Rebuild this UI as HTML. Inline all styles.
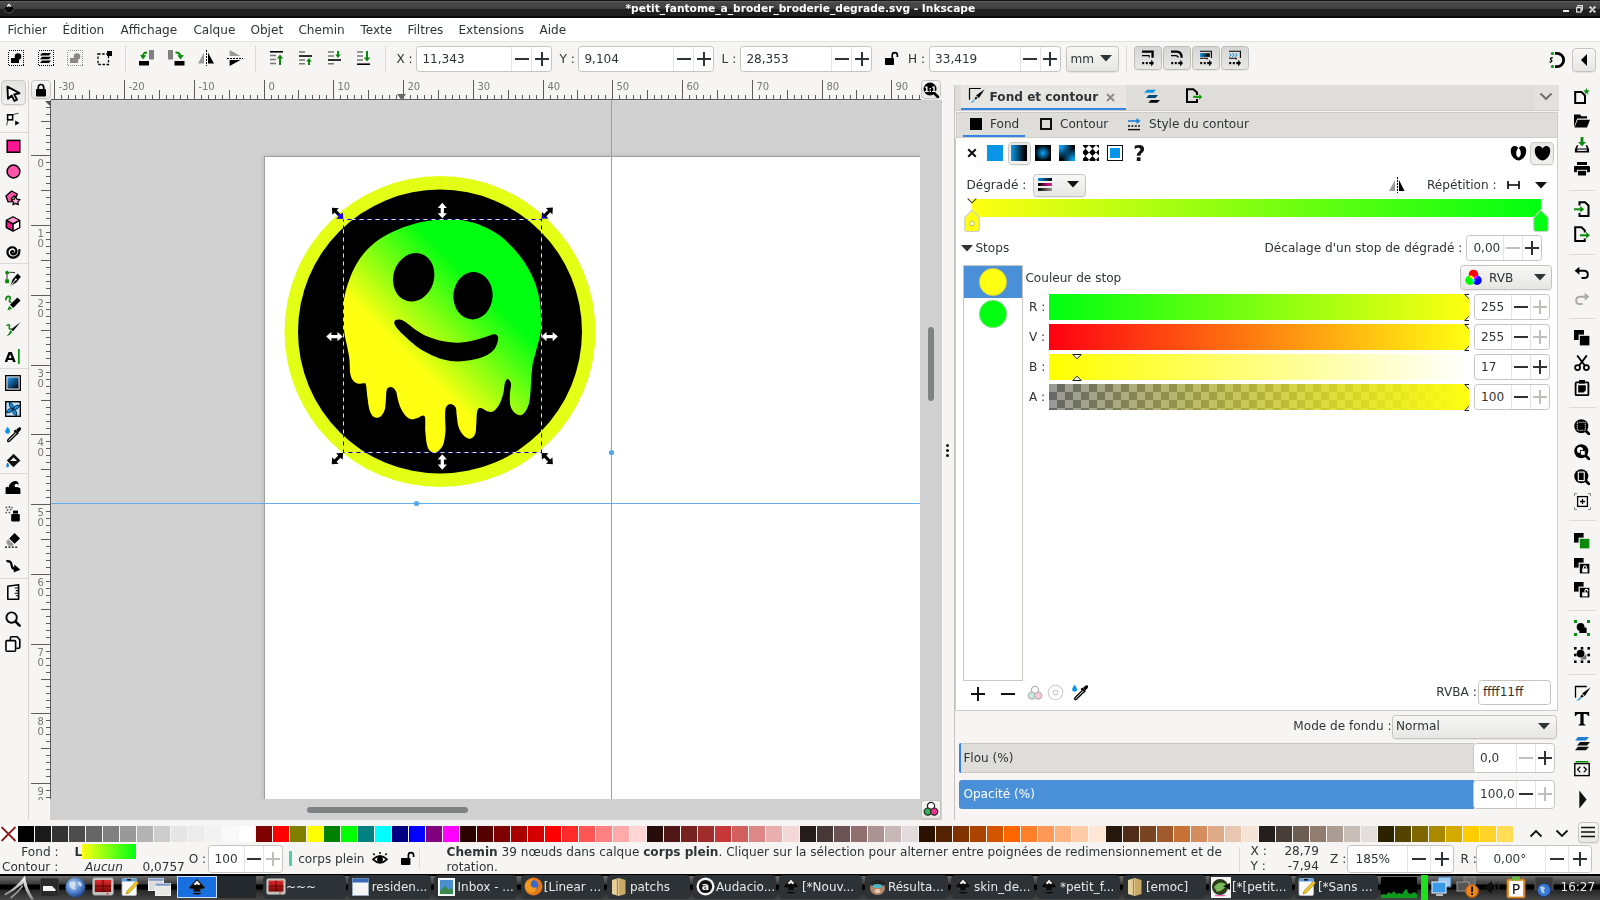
<!DOCTYPE html>
<html lang="fr"><head><meta charset="utf-8"><title>Inkscape</title>
<style>
html,body{margin:0;padding:0}
body{width:1600px;height:900px;position:relative;overflow:hidden;background:#f6f5f4;font-family:"DejaVu Sans","Liberation Sans",sans-serif;font-size:12px;color:#2e3436}
.t{position:absolute;white-space:nowrap;line-height:1}
.r{position:absolute;box-sizing:border-box;display:block}
.box{position:absolute;box-sizing:border-box;background:#fff;border:1px solid #c6c4c0;border-radius:3.5px}
.btn{position:absolute;box-sizing:border-box;border:1px solid #c6c4c0;border-radius:3.5px;background:linear-gradient(#f7f7f6,#e6e6e3);box-shadow:0 1px 0 rgba(0,0,0,.06)}
.btn.on{background:#d6d1cd;border-color:#b6b0aa}
</style></head><body>
<div class="r" style="left:0px;top:0px;width:1600px;height:18px;background:linear-gradient(#111 0,#111 1px,#5c5c5c 1px,#5c5c5c 2px,#4b4b4b 2px,#3d3d3d 9px,#212121 9px,#1f1f1f 16px,#0c0c0c 16px);"></div>
<div class="t" style="left:625.5px;top:4px;font-size:10.67px;color:#fff;font-weight:bold;">*petit_fantome_a_broder_broderie_degrade.svg - Inkscape</div>
<svg class="r" style="left:3px;top:2px;" width="12" height="13" viewBox="0 0 12 13"><path d="M6 0.5 L11.5 6.5 Q9 8 10 9.5 Q6 12.5 2 9.5 Q3 8 0.5 6.5 Z" fill="#0a0a0a" stroke="#777" stroke-width=".6"/><path d="M6 1.2 L8.6 4.2 L7.2 5 L6 4.2 L4.8 5 L3.4 4.2Z" fill="#e8e8e8"/></svg>
<div class="r" style="left:1563px;top:10px;width:6px;height:2px;background:#eee;"></div>
<svg class="r" style="left:1576px;top:5px;" width="7" height="8" viewBox="0 0 7 8"><rect x="2" y=".7" width="4.3" height="4.3" fill="none" stroke="#eee" stroke-width="1.2"/><rect x=".7" y="2.7" width="4.3" height="4.3" fill="#111" stroke="#eee" stroke-width="1.2"/></svg>
<svg class="r" style="left:1589px;top:6px;" width="7" height="7" viewBox="0 0 7 7"><path d="M.7 .7 L6.3 6.3 M6.3 .7 L.7 6.3" stroke="#eee" stroke-width="1.8"/><rect x="2" y="2" width="3" height="3" fill="#bbb"/></svg>
<div class="r" style="left:0px;top:18px;width:1600px;height:23px;background:#fff;"></div>
<div class="r" style="left:0px;top:41px;width:1600px;height:1px;background:#e4e2e0;"></div>
<div class="t" style="left:7.4px;top:24px;font-size:12.1px;">Fichier</div>
<div class="t" style="left:62.4px;top:24px;font-size:12.1px;">Édition</div>
<div class="t" style="left:120.4px;top:24px;font-size:12.1px;">Affichage</div>
<div class="t" style="left:193.4px;top:24px;font-size:12.1px;">Calque</div>
<div class="t" style="left:250.4px;top:24px;font-size:12.1px;">Objet</div>
<div class="t" style="left:298.4px;top:24px;font-size:12.1px;">Chemin</div>
<div class="t" style="left:360.4px;top:24px;font-size:12.1px;">Texte</div>
<div class="t" style="left:407.4px;top:24px;font-size:12.1px;">Filtres</div>
<div class="t" style="left:458.4px;top:24px;font-size:12.1px;">Extensions</div>
<div class="t" style="left:539.4px;top:24px;font-size:12.1px;">Aide</div>
<svg class="r" style="left:8px;top:50px;" width="16" height="16" viewBox="0 0 16 16"><rect x=".5" y=".5" width="15" height="15" stroke="#000" stroke-width="1" stroke-dasharray="1 1" fill="none" shape-rendering="crispEdges"/><rect x="3" y="8" width="8" height="5" fill="#000"/><circle cx="10" cy="6.5" r="3.3" fill="#000"/></svg>
<svg class="r" style="left:38px;top:50px;" width="16" height="16" viewBox="0 0 16 16"><rect x=".5" y=".5" width="15" height="15" stroke="#000" stroke-width="1" stroke-dasharray="1 1" fill="none" shape-rendering="crispEdges"/><path d="M4 3h9l-2 2.6H2zM4 6.7h9l-2 2.6H2zM4 10.4h9l-2 2.6H2z" fill="#000"/></svg>
<svg class="r" style="left:67px;top:50px;" width="16" height="16" viewBox="0 0 16 16"><rect x=".5" y=".5" width="15" height="15" stroke="#8a8a8a" stroke-width="1" stroke-dasharray="1 1" fill="none" shape-rendering="crispEdges"/><rect x="3" y="8" width="8" height="5" fill="#8a8a8a"/><circle cx="10" cy="6.5" r="3.3" fill="#8a8a8a"/></svg>
<svg class="r" style="left:97px;top:50px;" width="16" height="16" viewBox="0 0 16 16"><rect x="1" y="4" width="10.5" height="10.5" stroke="#000" stroke-width="1.3" stroke-dasharray="2.5 1.6" fill="none"/><rect x="10" y="1" width="5" height="5" fill="#000"/></svg>
<div class="r" style="left:125px;top:46px;width:1px;height:26px;background:#dcd9d6;"></div>
<svg class="r" style="left:139px;top:49px;" width="17" height="17" viewBox="0 0 17 17"><rect x="10" y="1" width="5" height="9.5" fill="#808080"/><rect x="0" y="12" width="10" height="4.5" fill="#000"/><path d="M8 3.5 Q3.5 3.5 4 8" stroke="#0a8a0a" stroke-width="1.8" fill="none"/><path d="M1 6 L4 10.5 L7.3 6.3 Z" fill="#0a8a0a"/></svg>
<svg class="r" style="left:168px;top:49px;" width="17" height="17" viewBox="0 0 17 17"><rect x="0" y="1" width="5" height="9.5" fill="#808080"/><rect x="6.5" y="12" width="10" height="4.5" fill="#000"/><path d="M7.5 3.5 Q12.5 3.5 12.5 8" stroke="#0a8a0a" stroke-width="1.8" fill="none"/><path d="M9.3 6.3 L12.6 10.5 L15.8 6 Z" fill="#0a8a0a"/></svg>
<svg class="r" style="left:198px;top:50px;" width="16" height="16" viewBox="0 0 16 16"><path d="M6 2.6V13.5H0Z" fill="#9a9a9a"/><path d="M10 2.6V13.5H16Z" fill="#000"/><path d="M8 0V16" stroke="#000" stroke-width="1" stroke-dasharray="2 1" shape-rendering="crispEdges"/></svg>
<svg class="r" style="left:227px;top:50px;" width="16" height="16" viewBox="0 0 16 16"><path d="M2.6 6H13.5L2.6 0Z" fill="#9a9a9a"/><path d="M2.6 10H13.5L2.6 16Z" fill="#000"/><path d="M0 8H16" stroke="#000" stroke-width="1" stroke-dasharray="2 1" shape-rendering="crispEdges"/></svg>
<div class="r" style="left:255px;top:46px;width:1px;height:26px;background:#dcd9d6;"></div>
<svg class="r" style="left:270px;top:50px;" width="14" height="16" viewBox="0 0 14 16"><rect x="0" y="1" width="13" height="1.6" fill="#000"/><path d="M0 5.5h6M0 9.5h6M0 13.5h6" stroke="#777" stroke-width="1.4"/><path d="M10 15V7" stroke="#0a8a0a" stroke-width="2"/><path d="M6.8 8.5L10 4.5L13.2 8.5Z" fill="#0a8a0a"/></svg>
<svg class="r" style="left:299px;top:50px;" width="14" height="16" viewBox="0 0 14 16"><path d="M0 2h6M0 10h6M0 13.8h6" stroke="#777" stroke-width="1.4"/><rect x="0" y="5.2" width="13" height="1.6" fill="#000"/><path d="M10 15V10.5" stroke="#0a8a0a" stroke-width="2"/><path d="M7.2 11.5L10 8L12.8 11.5Z" fill="#0a8a0a"/></svg>
<svg class="r" style="left:328px;top:50px;" width="14" height="16" viewBox="0 0 14 16"><path d="M0 2h6M0 6h6M0 13.8h6" stroke="#777" stroke-width="1.4"/><rect x="0" y="9.2" width="13" height="1.6" fill="#000"/><path d="M10 1V5" stroke="#0a8a0a" stroke-width="2"/><path d="M7.2 4.5L10 8L12.8 4.5Z" fill="#0a8a0a"/></svg>
<svg class="r" style="left:357px;top:50px;" width="14" height="16" viewBox="0 0 14 16"><path d="M0 2h6M0 6h6M0 10h6" stroke="#777" stroke-width="1.4"/><rect x="0" y="13.4" width="13" height="1.6" fill="#000"/><path d="M10 1V8" stroke="#0a8a0a" stroke-width="2"/><path d="M6.8 7.5L10 11.5L13.2 7.5Z" fill="#0a8a0a"/></svg>
<div class="r" style="left:385px;top:46px;width:1px;height:26px;background:#dcd9d6;"></div>
<div class="t" style="left:396.4px;top:53px;font-size:12.1px;">X :</div>
<div class="box" style="left:416px;top:46px;width:136px;height:26px"></div>
<div class="r" style="left:511px;top:47px;width:1px;height:24px;background:#e6e3e0;"></div>
<div class="r" style="left:531px;top:47px;width:1px;height:24px;background:#e6e3e0;"></div>
<div class="t" style="left:422.4px;top:53px;font-size:12.1px;">11,343</div>
<div class="r" style="left:514.5px;top:58.0px;width:14px;height:2px;background:#2e3436;"></div>
<div class="r" style="left:534.5px;top:58.0px;width:14px;height:2px;background:#2e3436;"></div>
<div class="r" style="left:540.5px;top:52.0px;width:2px;height:14px;background:#2e3436;"></div>
<div class="t" style="left:559.6px;top:53px;font-size:12.1px;">Y :</div>
<div class="box" style="left:578px;top:46px;width:136px;height:26px"></div>
<div class="r" style="left:673px;top:47px;width:1px;height:24px;background:#e6e3e0;"></div>
<div class="r" style="left:693px;top:47px;width:1px;height:24px;background:#e6e3e0;"></div>
<div class="t" style="left:584.4px;top:53px;font-size:12.1px;">9,104</div>
<div class="r" style="left:676.5px;top:58.0px;width:14px;height:2px;background:#2e3436;"></div>
<div class="r" style="left:696.5px;top:58.0px;width:14px;height:2px;background:#2e3436;"></div>
<div class="r" style="left:702.5px;top:52.0px;width:2px;height:14px;background:#2e3436;"></div>
<div class="t" style="left:721.6px;top:53px;font-size:12.1px;">L :</div>
<div class="box" style="left:739.5px;top:46px;width:132.5px;height:26px"></div>
<div class="r" style="left:831.0px;top:47px;width:1px;height:24px;background:#e6e3e0;"></div>
<div class="r" style="left:851.0px;top:47px;width:1px;height:24px;background:#e6e3e0;"></div>
<div class="t" style="left:746.4px;top:53px;font-size:12.1px;">28,353</div>
<div class="r" style="left:834.5px;top:58.0px;width:14px;height:2px;background:#2e3436;"></div>
<div class="r" style="left:854.5px;top:58.0px;width:14px;height:2px;background:#2e3436;"></div>
<div class="r" style="left:860.5px;top:52.0px;width:2px;height:14px;background:#2e3436;"></div>
<svg class="r" style="left:884px;top:51px;" width="15" height="15" viewBox="0 0 15 15"><rect x="1" y="7" width="9" height="7" rx=".8" fill="#000"/><path d="M8.2 7.5V4.3a2.6 2.6 0 0 1 5.2 0V6" stroke="#000" stroke-width="1.7" fill="none"/></svg>
<div class="t" style="left:908px;top:53px;font-size:12.1px;">H :</div>
<div class="box" style="left:928.5px;top:46px;width:132px;height:26px"></div>
<div class="r" style="left:1019.5px;top:47px;width:1px;height:24px;background:#e6e3e0;"></div>
<div class="r" style="left:1039.5px;top:47px;width:1px;height:24px;background:#e6e3e0;"></div>
<div class="t" style="left:935px;top:53px;font-size:12.1px;">33,419</div>
<div class="r" style="left:1023.0px;top:58.0px;width:14px;height:2px;background:#2e3436;"></div>
<div class="r" style="left:1043.0px;top:58.0px;width:14px;height:2px;background:#2e3436;"></div>
<div class="r" style="left:1049.0px;top:52.0px;width:2px;height:14px;background:#2e3436;"></div>
<div class="btn" style="left:1065.5px;top:46px;width:53px;height:26px"></div>
<div class="t" style="left:1070.5px;top:53px;font-size:12.1px;">mm</div>
<svg class="r" style="left:1100px;top:55px;" width="12" height="7" viewBox="0 0 12 7"><path d="M0 0H12L6 6.5Z" fill="#2e3436"/></svg>
<div class="r" style="left:1126px;top:46px;width:1px;height:26px;background:#dcd9d6;"></div>
<div class="btn" style="left:1134px;top:46px;width:28px;height:24px;background:linear-gradient(#d6d6d4,#e8e8e6);border-color:#bfbdb7;border-radius:3.5px"></div>
<div class="btn" style="left:1163px;top:46px;width:28px;height:24px;background:linear-gradient(#d6d6d4,#e8e8e6);border-color:#bfbdb7;border-radius:3.5px"></div>
<div class="btn" style="left:1192px;top:46px;width:28px;height:24px;background:linear-gradient(#d6d6d4,#e8e8e6);border-color:#bfbdb7;border-radius:3.5px"></div>
<div class="btn" style="left:1221px;top:46px;width:28px;height:24px;background:linear-gradient(#d6d6d4,#e8e8e6);border-color:#bfbdb7;border-radius:3.5px"></div>
<svg class="r" style="left:1140px;top:50px;" width="17" height="17" viewBox="0 0 17 17"><path d="M2 1.7H12.6V7.8" stroke="#000" stroke-width="2.3" fill="none"/><path d="M2 5.6H9.2V7.6" stroke="#000" stroke-width="1.1" fill="none"/><rect x="2.2" y="12" width="2" height="2.2" fill="#000"/><rect x="5.8" y="12" width="2" height="2.2" fill="#000"/><rect x="9.2" y="12" width="2.6" height="2.2" fill="#000"/><path d="M11.2 9.8L14 13.1L11.2 16.4Z" fill="#000"/></svg>
<svg class="r" style="left:1169px;top:50px;" width="17" height="17" viewBox="0 0 17 17"><path d="M2 1.7H7.6Q12.6 1.7 12.6 7.8" stroke="#000" stroke-width="2.3" fill="none"/><path d="M2 5.6H6.6Q9.2 5.6 9.2 7.8" stroke="#000" stroke-width="1.1" fill="none"/><rect x="2.2" y="12" width="2" height="2.2" fill="#000"/><rect x="5.8" y="12" width="2" height="2.2" fill="#000"/><rect x="9.2" y="12" width="2.6" height="2.2" fill="#000"/><path d="M11.2 9.8L14 13.1L11.2 16.4Z" fill="#000"/></svg>
<svg class="r" style="left:1198px;top:50px;" width="17" height="17" viewBox="0 0 17 17"><defs><linearGradient id="tg1" x1="0" x2="1"><stop offset="0" stop-color="#0a96e8"/><stop offset=".85" stop-color="#000"/></linearGradient></defs><path d="M2 1.2H13.4V8" stroke="#000" stroke-width="1.1" fill="none"/><rect x="2" y="3.2" width="9.8" height="3.7" fill="url(#tg1)"/><path d="M2 8.2H9.2V9.6" stroke="#000" stroke-width="1.1" fill="none"/><rect x="2.2" y="12" width="2" height="2.2" fill="#000"/><rect x="5.8" y="12" width="2" height="2.2" fill="#000"/><rect x="9.2" y="12" width="2.6" height="2.2" fill="#000"/><path d="M11.2 9.8L14 13.1L11.2 16.4Z" fill="#000"/></svg>
<svg class="r" style="left:1227px;top:50px;" width="17" height="17" viewBox="0 0 17 17"><path d="M2 1.2H13.4V8" stroke="#000" stroke-width="1.1" fill="none"/><path d="M2.2 3.4L4.2 5.1L2.2 6.8M5.2 3.4L7.2 5.1L5.2 6.8M8.2 3.4L10.2 5.1L8.2 6.8" stroke="#0a96e8" stroke-width="1" fill="none"/><path d="M2 8.2H9.2V9.6" stroke="#000" stroke-width="1.1" fill="none"/><rect x="2.2" y="12" width="2" height="2.2" fill="#000"/><rect x="5.8" y="12" width="2" height="2.2" fill="#000"/><rect x="9.2" y="12" width="2.6" height="2.2" fill="#000"/><path d="M11.2 9.8L14 13.1L11.2 16.4Z" fill="#000"/></svg>
<svg class="r" style="left:1547px;top:50px;" width="20" height="20" viewBox="0 0 20 20"><path d="M8 3.3H10A6.65 6.65 0 0 1 10 16.6H8" stroke="#000" stroke-width="2.8" fill="none"/><circle cx="5.4" cy="3.5" r="1.6" fill="#0a960a"/><circle cx="5.4" cy="16.5" r="1.6" fill="#0a960a"/><path d="M5.8 7.6Q2.6 8 3.8 9.6Q6.4 10.8 2.6 12.4" stroke="#000" stroke-width="1.3" fill="none"/></svg>
<div class="btn" style="left:1572.4px;top:48.2px;width:23.4px;height:23.6px;border-radius:4px"></div>
<svg class="r" style="left:1580px;top:54px;" width="8" height="12" viewBox="0 0 8 12"><path d="M7 0V12L1 6Z" fill="#000"/></svg>
<div class="r" style="left:28px;top:80px;width:1px;height:740px;background:#d8d5d2;"></div>
<div class="r" style="left:920px;top:100px;width:22px;height:720px;background:#cfd0cf;"></div>
<div class="r" style="left:50px;top:799px;width:892px;height:21px;background:#cfd0cf;"></div>
<div class="r" style="left:51px;top:100px;width:869px;height:699px;background:#d1d1d1;overflow:hidden"><div class="r" style="left:213px;top:56px;width:700px;height:700px;background:#fff;border-left:1px solid #9f9f9f;border-top:1px solid #9f9f9f;box-shadow:0 0 5px rgba(0,0,0,.14)"></div></div>
<div class="r" style="left:611px;top:100px;width:1px;height:699px;background:#60aeec;"></div>
<div class="r" style="left:51px;top:503px;width:869px;height:1px;background:#60aeec;"></div>
<svg class="r" style="left:413px;top:500px;" width="7" height="7" viewBox="0 0 7 7"><circle cx="3.5" cy="3.5" r="2.6" fill="#52a8ea"/></svg>
<svg class="r" style="left:608px;top:449px;" width="7" height="7" viewBox="0 0 7 7"><circle cx="3.5" cy="3.5" r="2.6" fill="#52a8ea"/></svg>
<div class="r" style="left:928px;top:327px;width:6px;height:74px;background:#7e8283;border-radius:3px"></div>
<div class="r" style="left:307px;top:807px;width:161px;height:6px;background:#7e8283;border-radius:3px"></div>
<svg class="r" style="left:0px;top:80px;" width="942" height="20" viewBox="0 0 942 20"><rect x="31" y="0" width="911" height="20" fill="#f6f5f4"/><path d="M54.5 0V19M61.5 14.5V19M68.5 14.5V19M75.5 14.5V19M82.5 14.5V19M89.5 9.5V19M96.5 14.5V19M103.5 14.5V19M110.5 14.5V19M117.5 14.5V19M124.5 0V19M131.5 14.5V19M138.5 14.5V19M145.5 14.5V19M152.5 14.5V19M159.5 9.5V19M166.5 14.5V19M173.5 14.5V19M180.5 14.5V19M187.5 14.5V19M194.5 0V19M201.5 14.5V19M208.5 14.5V19M215.5 14.5V19M222.5 14.5V19M229.5 9.5V19M236.5 14.5V19M243.5 14.5V19M250.5 14.5V19M257.5 14.5V19M264.5 0V19M271.5 14.5V19M278.5 14.5V19M285.5 14.5V19M292.5 14.5V19M298.5 9.5V19M305.5 14.5V19M312.5 14.5V19M319.5 14.5V19M326.5 14.5V19M333.5 0V19M340.5 14.5V19M347.5 14.5V19M354.5 14.5V19M361.5 14.5V19M368.5 9.5V19M375.5 14.5V19M382.5 14.5V19M389.5 14.5V19M396.5 14.5V19M403.5 0V19M410.5 14.5V19M417.5 14.5V19M424.5 14.5V19M431.5 14.5V19M438.5 9.5V19M445.5 14.5V19M452.5 14.5V19M459.5 14.5V19M466.5 14.5V19M473.5 0V19M480.5 14.5V19M487.5 14.5V19M494.5 14.5V19M501.5 14.5V19M508.5 9.5V19M515.5 14.5V19M522.5 14.5V19M529.5 14.5V19M536.5 14.5V19M543.5 0V19M550.5 14.5V19M557.5 14.5V19M564.5 14.5V19M571.5 14.5V19M577.5 9.5V19M584.5 14.5V19M591.5 14.5V19M598.5 14.5V19M605.5 14.5V19M612.5 0V19M619.5 14.5V19M626.5 14.5V19M633.5 14.5V19M640.5 14.5V19M647.5 9.5V19M654.5 14.5V19M661.5 14.5V19M668.5 14.5V19M675.5 14.5V19M682.5 0V19M689.5 14.5V19M696.5 14.5V19M703.5 14.5V19M710.5 14.5V19M717.5 9.5V19M724.5 14.5V19M731.5 14.5V19M738.5 14.5V19M745.5 14.5V19M752.5 0V19M759.5 14.5V19M766.5 14.5V19M773.5 14.5V19M780.5 14.5V19M787.5 9.5V19M794.5 14.5V19M801.5 14.5V19M808.5 14.5V19M815.5 14.5V19M822.5 0V19M829.5 14.5V19M836.5 14.5V19M843.5 14.5V19M850.5 14.5V19M856.5 9.5V19M863.5 14.5V19M870.5 14.5V19M877.5 14.5V19M884.5 14.5V19M891.5 0V19M898.5 14.5V19M905.5 14.5V19M912.5 14.5V19M919.5 14.5V19" stroke="#5c5c5c" stroke-width="1" fill="none" shape-rendering="crispEdges"/><rect x="51" y="19" width="870" height="1" fill="#5c5c5c"/></svg>
<div class="t" style="left:58.4px;top:82px;font-size:10px;color:#777;">-30</div>
<div class="t" style="left:128.4px;top:82px;font-size:10px;color:#777;">-20</div>
<div class="t" style="left:198.4px;top:82px;font-size:10px;color:#777;">-10</div>
<div class="t" style="left:268.4px;top:82px;font-size:10px;color:#777;">0</div>
<div class="t" style="left:337.4px;top:82px;font-size:10px;color:#777;">10</div>
<div class="t" style="left:407.4px;top:82px;font-size:10px;color:#777;">20</div>
<div class="t" style="left:477.4px;top:82px;font-size:10px;color:#777;">30</div>
<div class="t" style="left:547.4px;top:82px;font-size:10px;color:#777;">40</div>
<div class="t" style="left:616.4px;top:82px;font-size:10px;color:#777;">50</div>
<div class="t" style="left:686.4px;top:82px;font-size:10px;color:#777;">60</div>
<div class="t" style="left:756.4px;top:82px;font-size:10px;color:#777;">70</div>
<div class="t" style="left:826.4px;top:82px;font-size:10px;color:#777;">80</div>
<div class="t" style="left:895.4px;top:82px;font-size:10px;color:#777;">90</div>
<svg class="r" style="left:397px;top:94px;" width="9" height="6" viewBox="0 0 9 6"><path d="M0 0H9L4.5 6Z" fill="#666"/></svg>
<svg class="r" style="left:31px;top:100px;" width="20" height="699" viewBox="0 0 20 699"><path d="M14.5 7.5H19M14.5 14.5H19M9.5 21.5H19M14.5 28.5H19M14.5 35.5H19M14.5 42.5H19M14.5 49.5H19M0 55.5H19M14.5 62.5H19M14.5 69.5H19M14.5 76.5H19M14.5 83.5H19M9.5 90.5H19M14.5 97.5H19M14.5 104.5H19M14.5 111.5H19M14.5 118.5H19M0 125.5H19M14.5 132.5H19M14.5 139.5H19M14.5 146.5H19M14.5 153.5H19M9.5 160.5H19M14.5 167.5H19M14.5 174.5H19M14.5 181.5H19M14.5 188.5H19M0 195.5H19M14.5 202.5H19M14.5 209.5H19M14.5 216.5H19M14.5 223.5H19M9.5 230.5H19M14.5 237.5H19M14.5 244.5H19M14.5 251.5H19M14.5 258.5H19M0 265.5H19M14.5 272.5H19M14.5 279.5H19M14.5 286.5H19M14.5 293.5H19M9.5 300.5H19M14.5 307.5H19M14.5 314.5H19M14.5 321.5H19M14.5 328.5H19M0 334.5H19M14.5 341.5H19M14.5 348.5H19M14.5 355.5H19M14.5 362.5H19M9.5 369.5H19M14.5 376.5H19M14.5 383.5H19M14.5 390.5H19M14.5 397.5H19M0 404.5H19M14.5 411.5H19M14.5 418.5H19M14.5 425.5H19M14.5 432.5H19M9.5 439.5H19M14.5 446.5H19M14.5 453.5H19M14.5 460.5H19M14.5 467.5H19M0 474.5H19M14.5 481.5H19M14.5 488.5H19M14.5 495.5H19M14.5 502.5H19M9.5 509.5H19M14.5 516.5H19M14.5 523.5H19M14.5 530.5H19M14.5 537.5H19M0 544.5H19M14.5 551.5H19M14.5 558.5H19M14.5 565.5H19M14.5 572.5H19M9.5 579.5H19M14.5 586.5H19M14.5 593.5H19M14.5 600.5H19M14.5 607.5H19M0 613.5H19M14.5 620.5H19M14.5 627.5H19M14.5 634.5H19M14.5 641.5H19M9.5 648.5H19M14.5 655.5H19M14.5 662.5H19M14.5 669.5H19M14.5 676.5H19M0 683.5H19M14.5 690.5H19M14.5 697.5H19" stroke="#5c5c5c" stroke-width="1" fill="none" shape-rendering="crispEdges"/><rect x="19" y="0" width="1" height="699" fill="#5c5c5c"/></svg>
<div class="t" style="left:37.5px;top:159px;font-size:10px;color:#777;">0</div>
<div class="t" style="left:37.5px;top:229px;font-size:10px;color:#777;">1</div>
<div class="t" style="left:37.5px;top:239px;font-size:10px;color:#777;">0</div>
<div class="t" style="left:37.5px;top:299px;font-size:10px;color:#777;">2</div>
<div class="t" style="left:37.5px;top:309px;font-size:10px;color:#777;">0</div>
<div class="t" style="left:37.5px;top:369px;font-size:10px;color:#777;">3</div>
<div class="t" style="left:37.5px;top:379px;font-size:10px;color:#777;">0</div>
<div class="t" style="left:37.5px;top:438px;font-size:10px;color:#777;">4</div>
<div class="t" style="left:37.5px;top:448px;font-size:10px;color:#777;">0</div>
<div class="t" style="left:37.5px;top:508px;font-size:10px;color:#777;">5</div>
<div class="t" style="left:37.5px;top:518px;font-size:10px;color:#777;">0</div>
<div class="t" style="left:37.5px;top:578px;font-size:10px;color:#777;">6</div>
<div class="t" style="left:37.5px;top:588px;font-size:10px;color:#777;">0</div>
<div class="t" style="left:37.5px;top:648px;font-size:10px;color:#777;">7</div>
<div class="t" style="left:37.5px;top:658px;font-size:10px;color:#777;">0</div>
<div class="t" style="left:37.5px;top:717px;font-size:10px;color:#777;">8</div>
<div class="t" style="left:37.5px;top:727px;font-size:10px;color:#777;">0</div>
<div class="t" style="left:37.5px;top:787px;font-size:10px;color:#777;">9</div>
<div class="t" style="left:37.5px;top:797px;font-size:10px;color:#777;clip-path:inset(0 0 7px 0);">0</div>
<div class="btn" style="left:31px;top:80px;width:20px;height:19px"></div>
<svg class="r" style="left:35px;top:83px;" width="12" height="14" viewBox="0 0 12 14"><rect x="1" y="6" width="10" height="7.5" rx=".8" fill="#000"/><path d="M3.3 6.5V4.2a2.7 2.7 0 0 1 5.4 0V6.5" stroke="#000" stroke-width="1.7" fill="none"/></svg>
<svg class="r" style="left:44px;top:100px;" width="8" height="8" viewBox="0 0 8 8"><path d="M1 1H7L7 7Z" fill="#555"/></svg>
<div class="btn" style="left:921px;top:80px;width:20px;height:19px"></div>
<svg class="r" style="left:923px;top:82px;" width="16" height="16" viewBox="0 0 16 16"><circle cx="7" cy="7" r="6.5" fill="#000"/><path d="M11 11L15 15" stroke="#000" stroke-width="2.6" stroke-linecap="round"/><text x="7" y="10" font-size="7.5" font-weight="bold" fill="#fff" text-anchor="middle" font-family="DejaVu Sans" letter-spacing="-0.5">1:1</text></svg>
<div class="btn" style="left:921px;top:800px;width:20px;height:19px"></div>
<svg class="r" style="left:923px;top:801px;" width="16" height="16" viewBox="0 0 16 16"><circle cx="8" cy="5" r="3.6" fill="#fff" stroke="#222" stroke-width="1.2"/><circle cx="4.8" cy="10.6" r="3.6" fill="#2fb457" stroke="#222" stroke-width="1.2"/><circle cx="11.2" cy="10.6" r="3.6" fill="#e8368f" stroke="#222" stroke-width="1.2"/></svg>
<div class="r" style="left:945.6px;top:443.5px;width:3px;height:3px;background:#111;border-radius:50%"></div>
<div class="r" style="left:945.6px;top:448.5px;width:3px;height:3px;background:#111;border-radius:50%"></div>
<div class="r" style="left:945.6px;top:453.5px;width:3px;height:3px;background:#111;border-radius:50%"></div>
<svg class="r" style="left:51px;top:100px;" width="869" height="699" viewBox="51 100 869 699"><defs><linearGradient id="gg" gradientUnits="userSpaceOnUse" x1="414.5" y1="363.5" x2="485.5" y2="292.5"><stop offset="0" stop-color="#ffff11"/><stop offset="1" stop-color="#00ff11"/></linearGradient></defs><circle cx="440" cy="331.6" r="155.5" fill="#e3ff16"/><circle cx="440" cy="331.6" r="142" fill="#000"/><path d="M449.0 219.3C453.8 219.5 459.4 219.7 465.0 220.8C470.6 221.9 476.8 223.6 482.4 225.9C487.9 228.2 493.2 231.0 498.3 234.6C503.4 238.2 508.4 243.0 512.7 247.6C517.0 252.2 520.9 256.9 524.3 262.0C527.7 267.1 530.7 272.8 533.0 277.9C535.3 283.0 536.8 288.1 538.0 292.4C539.2 296.7 539.7 299.3 540.2 303.9C540.7 308.5 540.9 315.4 541.0 319.8C541.1 324.2 541.2 326.9 540.9 330.0C540.6 333.1 540.4 334.6 539.4 338.7C538.4 342.8 536.3 349.8 535.1 354.6C533.9 359.4 532.9 362.1 532.2 367.6C531.5 373.1 531.3 382.0 530.8 387.8C530.3 393.6 530.1 398.4 529.3 402.2C528.4 406.0 527.1 408.7 525.7 410.9C524.3 413.1 522.5 414.8 520.7 415.2C518.9 415.6 516.6 414.5 514.9 413.1C513.2 411.7 511.5 409.6 510.6 406.6C509.8 403.6 509.7 398.9 509.8 395.0C509.9 391.1 511.4 386.1 511.0 383.5C510.6 380.9 508.7 379.1 507.7 379.1C506.7 379.1 505.5 381.1 504.8 383.5C504.1 385.9 504.2 390.2 503.3 393.6C502.4 397.0 501.3 400.8 499.7 403.7C498.1 406.6 495.8 409.6 493.9 410.9C492.0 412.2 490.4 412.1 488.2 411.6C486.0 411.1 482.7 408.1 480.9 408.0C479.1 407.9 478.1 408.2 477.3 410.9C476.5 413.5 476.7 420.0 476.3 423.9C475.9 427.8 476.2 431.5 475.2 434.0C474.2 436.5 472.0 438.4 470.1 438.7C468.2 438.9 465.5 437.5 463.6 435.5C461.7 433.5 459.6 430.2 458.5 426.8C457.4 423.4 457.2 418.4 456.7 415.2C456.2 411.9 456.6 409.2 455.6 407.3C454.6 405.4 452.2 404.0 450.6 404.0C449.0 404.0 446.9 405.2 446.0 407.3C445.1 409.4 445.2 412.7 445.1 416.7C445.0 420.7 445.8 426.5 445.5 431.1C445.2 435.7 444.5 440.9 443.4 444.1C442.3 447.4 440.4 449.2 439.0 450.6C437.6 452.0 436.3 452.5 434.7 452.5C433.1 452.5 430.9 452.0 429.6 450.6C428.3 449.2 427.5 447.4 426.8 444.1C426.1 440.9 425.7 435.7 425.3 431.1C424.9 426.5 425.9 418.5 424.6 416.3C423.3 414.1 419.6 417.6 417.4 418.1C415.2 418.6 413.5 419.7 411.6 419.3C409.7 418.9 407.6 417.9 405.8 416.0C404.0 414.1 402.0 410.8 400.7 408.0C399.4 405.2 398.7 402.3 397.9 399.4C397.1 396.5 396.9 392.8 395.7 390.7C394.5 388.6 392.1 387.2 390.6 387.1C389.1 387.0 387.5 387.9 386.7 390.0C385.9 392.1 386.2 396.1 385.9 399.4C385.6 402.6 385.6 406.7 384.8 409.5C384.0 412.3 382.5 414.6 381.2 416.0C379.9 417.4 378.3 417.7 376.9 417.7C375.5 417.7 373.9 417.4 372.6 416.0C371.4 414.6 370.2 412.5 369.4 409.5C368.5 406.5 368.1 401.9 367.5 397.9C366.9 393.9 366.6 388.1 366.1 385.6C365.6 383.2 365.9 383.5 364.6 383.2C363.3 382.9 360.0 384.1 358.1 383.7C356.2 383.3 354.4 382.3 353.1 380.6C351.8 378.9 350.8 376.9 350.2 373.3C349.6 369.7 349.9 363.2 349.4 358.9C348.9 354.6 348.1 351.6 347.3 347.3C346.5 343.0 345.0 337.8 344.4 332.9C343.8 328.0 343.7 323.6 343.6 318.0C343.5 312.4 343.0 306.0 344.0 299.6C345.0 293.2 346.8 286.1 349.4 279.4C352.0 272.6 355.5 265.1 359.6 259.1C363.7 253.1 368.5 247.8 374.0 243.2C379.5 238.6 386.1 234.9 392.8 231.7C399.6 228.4 407.3 225.7 414.5 223.7C421.7 221.7 430.4 220.5 436.1 219.8C441.9 219.1 444.2 219.1 449.0 219.3Z" fill="url(#gg)"/><ellipse cx="413.7" cy="277.3" rx="20.3" ry="24.6" transform="rotate(17 413.7 277.3)" fill="#000"/><ellipse cx="473" cy="295.7" rx="19.6" ry="23.7" transform="rotate(4 473 295.7)" fill="#000"/><path d="M395.7 320.1C397.1 319.5 399.5 318.9 402.9 320.5C406.3 322.1 411.6 327.1 415.9 329.9C420.2 332.7 424.3 335.2 428.9 337.1C433.5 339.0 438.6 340.4 443.4 341.3C448.2 342.2 453.0 342.8 457.8 342.7C462.6 342.6 467.5 341.8 472.3 340.8C477.1 339.8 483.1 337.6 486.7 336.5C490.3 335.4 492.1 334.4 493.9 334.3C495.7 334.2 496.8 334.8 497.5 335.8C498.2 336.8 498.5 337.9 498.0 340.1C497.5 342.3 496.6 346.3 494.7 348.8C492.8 351.3 490.2 353.5 486.7 355.3C483.2 357.1 478.5 358.6 473.7 359.6C468.9 360.6 462.9 361.5 457.8 361.5C452.8 361.5 448.2 360.9 443.4 359.6C438.6 358.3 433.5 356.1 428.9 353.8C424.3 351.5 420.0 348.9 415.9 345.9C411.8 342.9 407.3 338.4 404.4 335.8C401.5 333.2 400.2 331.9 398.6 330.0C397.0 328.1 395.0 325.8 394.5 324.1C394.0 322.5 394.3 320.7 395.7 320.1Z" fill="#000"/><rect x="343.5" y="219.5" width="198" height="233" fill="none" stroke="#00007a" stroke-width="1"/><rect x="343.5" y="219.5" width="198" height="233" fill="none" stroke="#dedede" stroke-width="1" stroke-dasharray="4 4"/></svg>
<svg class="r" style="left:51px;top:100px;mix-blend-mode:difference" width="869" height="699" viewBox="51 100 869 699"><path d="M-8.0 0L-2.8 -4.6V-1.6H2.8V-4.6L8.0 0L2.8 4.6V1.6H-2.8V4.6Z" transform="translate(337.6 213.4) rotate(45)" fill="#fff"/><path d="M-8.0 0L-2.8 -4.6V-1.6H2.8V-4.6L8.0 0L2.8 4.6V1.6H-2.8V4.6Z" transform="translate(547.2 213.2) rotate(-45)" fill="#fff"/><path d="M-8.0 0L-2.8 -4.6V-1.6H2.8V-4.6L8.0 0L2.8 4.6V1.6H-2.8V4.6Z" transform="translate(337.4 458.6) rotate(-45)" fill="#fff"/><path d="M-8.0 0L-2.8 -4.6V-1.6H2.8V-4.6L8.0 0L2.8 4.6V1.6H-2.8V4.6Z" transform="translate(547.2 458.6) rotate(45)" fill="#fff"/><path d="M-7.75 0L-2.55 -4.6V-1.6H2.55V-4.6L7.75 0L2.55 4.6V1.6H-2.55V4.6Z" transform="translate(442.3 210.6) rotate(90)" fill="#fff"/><path d="M-7.75 0L-2.55 -4.6V-1.6H2.55V-4.6L7.75 0L2.55 4.6V1.6H-2.55V4.6Z" transform="translate(442.3 462) rotate(90)" fill="#fff"/><path d="M-8.25 0L-3.05 -4.6V-1.6H3.05V-4.6L8.25 0L3.05 4.6V1.6H-3.05V4.6Z" transform="translate(334.4 336.6) rotate(0)" fill="#fff"/><path d="M-8.25 0L-3.05 -4.6V-1.6H3.05V-4.6L8.25 0L3.05 4.6V1.6H-3.05V4.6Z" transform="translate(549.6 336.6) rotate(0)" fill="#fff"/></svg>
<div class="r" style="left:954px;top:85px;width:1px;height:735px;background:#c6c3bf;"></div>
<div class="r" style="left:955px;top:85px;width:604px;height:25px;background:#deddda;"></div>
<div class="r" style="left:961px;top:85px;width:165px;height:25px;background:#e7e6e3;"></div>
<div class="r" style="left:961px;top:108px;width:165px;height:2px;background:#3584e4;"></div>
<div class="r" style="left:955px;top:110px;width:604px;height:1px;background:#cfccc8;"></div>
<div class="r" style="left:955px;top:111px;width:604px;height:1px;background:#f6f5f4;"></div>
<svg class="r" style="left:968px;top:87px;" width="18" height="18" viewBox="0 0 18 18"><path d="M1.5 12.8V1.5H12.8" stroke="#000" stroke-width="1.2" fill="none"/><path d="M16.6 2.2L10.9 11L8.1 8.6Z" fill="#000"/><path d="M8 9.6L9.6 11.2L7.6 12.6L6.6 11.6Z" fill="#000"/><path d="M6.2 12.2L7 13Q5.5 15.6 2 16Q4.6 14.4 6.2 12.2Z" fill="#1c96e8"/></svg>
<div class="t" style="left:989.6px;top:91px;font-size:12.1px;font-weight:bold;">Fond et contour</div>
<svg class="r" style="left:1106px;top:93px;" width="9" height="9" viewBox="0 0 9 9"><path d="M1 1L8 8M8 1L1 8" stroke="#8a8a88" stroke-width="1.8"/></svg>
<svg class="r" style="left:1143px;top:88px;" width="19" height="16" viewBox="0 0 19 16"><path d="M1.1 4.8L4.1 1.8H12.9L10.4 4.8Z" fill="#0a96e8"/><path d="M3.2 9.9L5.7 7.1H15L12.4 9.9Z" fill="#004a7a"/><path d="M5.3 14.75L7.8 12H17.1L14.1 14.75Z" fill="#000"/></svg>
<svg class="r" style="left:1185px;top:87px;" width="19" height="17" viewBox="0 0 19 17"><path d="M12 8V5.5L8.3 2.2H2V15H12V12" stroke="#000" stroke-width="2" fill="none"/><path d="M8.2 9.85H14.4" stroke="#0a960a" stroke-width="2.1"/><path d="M14.2 7L17.2 9.9L14.2 12.7Z" fill="#0a960a"/></svg>
<svg class="r" style="left:1539px;top:92px;" width="14" height="9" viewBox="0 0 14 9"><path d="M1.5 1.5L7 7L12.5 1.5" stroke="#555" stroke-width="1.8" fill="none"/></svg>
<div class="r" style="left:1534px;top:85px;width:25px;height:25px;background:rgba(255,255,255,.12);"></div>
<div class="r" style="left:956px;top:112px;width:602px;height:25px;background:#deddda;border:1px solid #cfccc8;border-bottom:none"></div>
<div class="r" style="left:963px;top:134.6px;width:62px;height:2.4px;background:#3584e4;"></div>
<div class="r" style="left:956px;top:137px;width:602px;height:1px;background:#cfccc8;"></div>
<div class="r" style="left:970px;top:118px;width:12px;height:12px;background:#000;"></div>
<div class="t" style="left:990px;top:118px;font-size:12.1px;">Fond</div>
<div class="r" style="left:1040px;top:118px;width:12px;height:12px;background:transparent;border:2px solid #111"></div>
<div class="t" style="left:1060px;top:118px;font-size:12.1px;">Contour</div>
<svg class="r" style="left:1128px;top:117px;" width="14" height="14" viewBox="0 0 14 14"><path d="M0 4H9" stroke="#1c7fd6" stroke-width="1.6"/><path d="M8.5 1L12.5 4L8.5 7Z" fill="#1c7fd6"/><path d="M0 9H12" stroke="#111" stroke-width="1.3" stroke-dasharray="2 1.4"/><path d="M0 12.6H12" stroke="#111" stroke-width="1.4"/></svg>
<div class="t" style="left:1149px;top:118px;font-size:12.1px;">Style du contour</div>
<div class="r" style="left:955px;top:137.8px;width:603px;height:573.2px;background:#fff;border:1px solid #cfccc8;border-top:none"></div>
<svg class="r" style="left:967px;top:148px;" width="10" height="10" viewBox="0 0 10 10"><path d="M1.2 1.2L8.8 8.8M8.8 1.2L1.2 8.8" stroke="#111" stroke-width="2"/></svg>
<div class="r" style="left:987px;top:145px;width:16px;height:16px;background:#0a96e8;"></div>
<div class="btn on" style="left:1008px;top:141.5px;width:22.5px;height:23px;background:linear-gradient(#e6e6e4,#f1f1ef);border-color:#cbc9c3;border-radius:4px"></div>
<div class="r" style="left:1011px;top:145px;width:16px;height:16px;background:linear-gradient(90deg,#0a9cf0,#000 88%);"></div>
<div class="r" style="left:1035px;top:145px;width:16px;height:16px;background:radial-gradient(circle closest-side,#0a9cf0 8%,#000 100%);"></div>
<div class="r" style="left:1059px;top:145px;width:16px;height:16px;background:radial-gradient(circle at 5% 5%,#0a9cf0 10%,rgba(10,156,240,0) 62%),radial-gradient(circle at 95% 95%,#0a9cf0 8%,rgba(10,156,240,0) 58%),#000;"></div>
<svg class="r" style="left:1083px;top:145px;" width="16" height="16" viewBox="0 0 16 16"><rect width="16" height="16" fill="#fff"/><path d="M2.5 -3.7L6.0 0L2.5 3.7L-1.0 0ZM2.5 3.7L6.0 7.4L2.5 11.100000000000001L-1.0 7.4ZM2.5 11.100000000000001L6.0 14.8L2.5 18.5L-1.0 14.8ZM9.5 -3.7L13.0 0L9.5 3.7L6.0 0ZM9.5 3.7L13.0 7.4L9.5 11.100000000000001L6.0 7.4ZM9.5 11.100000000000001L13.0 14.8L9.5 18.5L6.0 14.8ZM16.5 -3.7L20.0 0L16.5 3.7L13.0 0ZM16.5 3.7L20.0 7.4L16.5 11.100000000000001L13.0 7.4ZM16.5 11.100000000000001L20.0 14.8L16.5 18.5L13.0 14.8Z" fill="#000"/></svg>
<div class="r" style="left:1107px;top:145px;width:16px;height:16px;background:#fff;border:1.3px solid #111"></div>
<div class="r" style="left:1110px;top:148px;width:10px;height:10px;background:#0a96e8;"></div>
<div class="t" style="left:1133.2px;top:144px;font-size:21px;color:#111;font-weight:bold;">?</div>
<svg class="r" style="left:1510px;top:145px;" width="17" height="16" viewBox="0 0 17 16"><path d="M8.5 15.5C3.5 14.5 .5 10 .8 5C1 2 3.5 .3 6 1.2Q8 2 8.5 3.5Q9 2 11 1.2C13.5 .3 16 2 16.2 5C16.5 10 13.5 14.5 8.5 15.5Z" fill="#000"/><path d="M8.5 2.6Q12.6 7.5 9.6 11.8Q8.5 13 7.4 11.8Q4.4 7.5 8.5 2.6Z" fill="#fff"/></svg>
<div class="btn on" style="left:1530px;top:141.5px;width:24px;height:23.5px;background:linear-gradient(#e6e6e4,#f1f1ef);border-color:#cbc9c3;border-radius:4px"></div>
<svg class="r" style="left:1534px;top:145px;" width="17" height="16" viewBox="0 0 17 16"><path d="M8.5 15.5C3.5 14.5 .5 10 .8 5C1 2 3.5 .3 6 1.2Q8 2 8.5 3.5Q9 2 11 1.2C13.5 .3 16 2 16.2 5C16.5 10 13.5 14.5 8.5 15.5Z" fill="#000"/></svg>
<div class="t" style="left:966.4px;top:179px;font-size:12.1px;">Dégradé :</div>
<div class="btn" style="left:1032.5px;top:173.5px;width:53px;height:23px"></div>
<svg class="r" style="left:1038px;top:178px;" width="14" height="14" viewBox="0 0 14 14"><rect y="0" width="14" height="3" fill="url(#gi1)"/><rect y="5" width="14" height="3" fill="url(#gi2)"/><rect y="10" width="14" height="3" fill="url(#gi3)"/><defs><linearGradient id="gi1"><stop offset="0" stop-color="#0a8fe6"/><stop offset="1" stop-color="#000"/></linearGradient><linearGradient id="gi2"><stop offset="0" stop-color="#000"/><stop offset="1" stop-color="#ff1493"/></linearGradient><linearGradient id="gi3"><stop offset="0" stop-color="#000"/><stop offset="1" stop-color="#999"/></linearGradient></defs></svg>
<svg class="r" style="left:1067px;top:181px;" width="12" height="7" viewBox="0 0 12 7"><path d="M0 0H12L6 6.5Z" fill="#111"/></svg>
<svg class="r" style="left:1389px;top:177px;" width="16" height="16" viewBox="0 0 16 16"><path d="M6 3V14H0Z" fill="#9a9a9a"/><path d="M10 3V14H15.6Z" fill="#000"/><path d="M8 0V16" stroke="#000" stroke-width="1" stroke-dasharray="2 1" shape-rendering="crispEdges"/></svg>
<div class="t" style="left:1427px;top:179px;font-size:12.1px;">Répétition :</div>
<svg class="r" style="left:1507px;top:181px;" width="13" height="8" viewBox="0 0 13 8"><path d="M1 0V8M12 0V8M1 4H12" stroke="#000" stroke-width="1.6"/></svg>
<svg class="r" style="left:1535px;top:182px;" width="12" height="7" viewBox="0 0 12 7"><path d="M0 0H12L6 6.5Z" fill="#111"/></svg>
<div class="r" style="left:972px;top:199.4px;width:569px;height:17.6px;background:linear-gradient(90deg,#ffff11,#00ff11);"></div>
<svg class="r" style="left:967px;top:198px;" width="10" height="6" viewBox="0 0 10 6"><path d="M.7 .7L5 4.8L9.3 .7" stroke="#333" stroke-width="1.1" fill="none"/></svg>
<svg class="r" style="left:963px;top:209px;" width="18" height="24" viewBox="0 0 18 24"><path d="M9 1.2L16.3 8.5V20Q16.3 22.5 13.8 22.5H4.2Q1.7 22.5 1.7 20V8.5Z" fill="#ffff11" stroke="#d0d0d0" stroke-width="1.2"/><circle cx="9" cy="14.4" r="2.3" fill="#ffffc0" stroke="#b9b98a" stroke-width="1"/></svg>
<svg class="r" style="left:1532px;top:209px;" width="18" height="24" viewBox="0 0 18 24"><path d="M9 1.2L16.3 8.5V20Q16.3 22.5 13.8 22.5H4.2Q1.7 22.5 1.7 20V8.5Z" fill="#00ff11" stroke="#d0d0d0" stroke-width="1.2"/></svg>
<svg class="r" style="left:961px;top:245px;" width="12" height="7" viewBox="0 0 12 7"><path d="M0 0H12L6 6.5Z" fill="#2e3436"/></svg>
<div class="t" style="left:975.4px;top:242px;font-size:12.1px;">Stops</div>
<div class="t" style="left:1264.5px;top:242px;font-size:12.1px;">Décalage d'un stop de dégradé :</div>
<div class="box" style="left:1466px;top:235px;width:76px;height:26px"></div>
<div class="r" style="left:1503px;top:236px;width:1px;height:24px;background:#e6e3e0;"></div>
<div class="r" style="left:1522px;top:236px;width:1px;height:24px;background:#e6e3e0;"></div>
<div class="t" style="left:1473.4px;top:242px;font-size:12.1px;">0,00</div>
<div class="r" style="left:1506.0px;top:247.0px;width:14px;height:2px;background:#c0bfbc;"></div>
<div class="r" style="left:1525.0px;top:247.0px;width:14px;height:2px;background:#2e3436;"></div>
<div class="r" style="left:1531.0px;top:241.0px;width:2px;height:14px;background:#2e3436;"></div>
<div class="r" style="left:963px;top:265px;width:60px;height:416px;background:#fff;border:1px solid #cdc7c2"></div>
<div class="r" style="left:964px;top:266px;width:58px;height:32px;background:#4a90d9;"></div>
<svg class="r" style="left:978px;top:267px;" width="30" height="30" viewBox="0 0 30 30"><circle cx="15" cy="15" r="13.7" fill="#ffff11" stroke="#b8b86a" stroke-width=".8"/></svg>
<svg class="r" style="left:978px;top:299px;" width="30" height="30" viewBox="0 0 30 30"><circle cx="15" cy="15" r="13.7" fill="#00ff11" stroke="#9ad29a" stroke-width=".8"/></svg>
<div class="t" style="left:1025.4px;top:272px;font-size:12.1px;">Couleur de stop</div>
<div class="btn" style="left:1460px;top:265px;width:91.5px;height:25px"></div>
<svg class="r" style="left:1465px;top:269px;" width="17" height="17" viewBox="0 0 17 17"><g style="isolation:isolate"><circle cx="8.5" cy="5.4" r="4.7" fill="#ff0000"/><circle cx="5" cy="11.2" r="4.7" fill="#00ff00" style="mix-blend-mode:screen"/><circle cx="12" cy="11.2" r="4.7" fill="#0000ff" style="mix-blend-mode:screen"/></g></svg>
<div class="t" style="left:1489px;top:272px;font-size:12.1px;">RVB</div>
<svg class="r" style="left:1533.5px;top:274px;" width="12" height="7" viewBox="0 0 12 7"><path d="M0 0H12L6 6.5Z" fill="#2e3436"/></svg>
<div class="t" style="left:1029px;top:301px;font-size:12.1px;">R :</div>
<div class="r" style="left:1049px;top:294px;width:420px;height:26px;background:linear-gradient(90deg,#00ff11,#ffff11);"></div>
<div class="box" style="left:1474px;top:294px;width:76px;height:26px"></div>
<div class="r" style="left:1511px;top:295px;width:1px;height:24px;background:#e6e3e0;"></div>
<div class="r" style="left:1530px;top:295px;width:1px;height:24px;background:#e6e3e0;"></div>
<div class="t" style="left:1481px;top:301px;font-size:12.1px;">255</div>
<div class="r" style="left:1514.0px;top:306.0px;width:14px;height:2px;background:#2e3436;"></div>
<div class="r" style="left:1533.0px;top:306.0px;width:14px;height:2px;background:#c0bfbc;"></div>
<div class="r" style="left:1539.0px;top:300.0px;width:2px;height:14px;background:#c0bfbc;"></div>
<div class="t" style="left:1029px;top:331px;font-size:12.1px;">V :</div>
<div class="r" style="left:1049px;top:324px;width:420px;height:26px;background:linear-gradient(90deg,#ff0011,#ffff11);"></div>
<div class="box" style="left:1474px;top:324px;width:76px;height:26px"></div>
<div class="r" style="left:1511px;top:325px;width:1px;height:24px;background:#e6e3e0;"></div>
<div class="r" style="left:1530px;top:325px;width:1px;height:24px;background:#e6e3e0;"></div>
<div class="t" style="left:1481px;top:331px;font-size:12.1px;">255</div>
<div class="r" style="left:1514.0px;top:336.0px;width:14px;height:2px;background:#2e3436;"></div>
<div class="r" style="left:1533.0px;top:336.0px;width:14px;height:2px;background:#c0bfbc;"></div>
<div class="r" style="left:1539.0px;top:330.0px;width:2px;height:14px;background:#c0bfbc;"></div>
<div class="t" style="left:1029px;top:361px;font-size:12.1px;">B :</div>
<div class="r" style="left:1049px;top:354px;width:420px;height:26px;background:linear-gradient(90deg,#ffff00,#ffffff);"></div>
<div class="box" style="left:1474px;top:354px;width:76px;height:26px"></div>
<div class="r" style="left:1511px;top:355px;width:1px;height:24px;background:#e6e3e0;"></div>
<div class="r" style="left:1530px;top:355px;width:1px;height:24px;background:#e6e3e0;"></div>
<div class="t" style="left:1481px;top:361px;font-size:12.1px;">17</div>
<div class="r" style="left:1514.0px;top:366.0px;width:14px;height:2px;background:#2e3436;"></div>
<div class="r" style="left:1533.0px;top:366.0px;width:14px;height:2px;background:#2e3436;"></div>
<div class="r" style="left:1539.0px;top:360.0px;width:2px;height:14px;background:#2e3436;"></div>
<div class="t" style="left:1029px;top:391px;font-size:12.1px;">A :</div>
<div class="r" style="left:1049px;top:384px;width:420px;height:26px;background:linear-gradient(90deg,rgba(255,255,17,0),#ffff11),repeating-conic-gradient(#666 0 25%,#999 0 50%) 0 0/16px 16px;"></div>
<div class="box" style="left:1474px;top:384px;width:76px;height:26px"></div>
<div class="r" style="left:1511px;top:385px;width:1px;height:24px;background:#e6e3e0;"></div>
<div class="r" style="left:1530px;top:385px;width:1px;height:24px;background:#e6e3e0;"></div>
<div class="t" style="left:1481px;top:391px;font-size:12.1px;">100</div>
<div class="r" style="left:1514.0px;top:396.0px;width:14px;height:2px;background:#2e3436;"></div>
<div class="r" style="left:1533.0px;top:396.0px;width:14px;height:2px;background:#c0bfbc;"></div>
<div class="r" style="left:1539.0px;top:390.0px;width:2px;height:14px;background:#c0bfbc;"></div>
<svg class="r" style="left:1072px;top:353.5px;" width="10" height="27" viewBox="0 0 10 27"><path d="M.8 .5H9.2L5 4.8Z" fill="#fff" stroke="#000" stroke-width=".9"/><path d="M.8 26.5H9.2L5 22.2Z" fill="#fff" stroke="#000" stroke-width=".9"/></svg>
<svg class="r" style="left:1464px;top:293.5px;" width="5" height="27" viewBox="0 0 5 27"><path d="M.8 .5H9.2L5 4.8Z" fill="#fff" stroke="#000" stroke-width=".9"/><path d="M.8 26.5H9.2L5 22.2Z" fill="#fff" stroke="#000" stroke-width=".9"/></svg>
<svg class="r" style="left:1464px;top:323.5px;" width="5" height="27" viewBox="0 0 5 27"><path d="M.8 .5H9.2L5 4.8Z" fill="#fff" stroke="#000" stroke-width=".9"/><path d="M.8 26.5H9.2L5 22.2Z" fill="#fff" stroke="#000" stroke-width=".9"/></svg>
<svg class="r" style="left:1464px;top:383.5px;" width="5" height="27" viewBox="0 0 5 27"><path d="M.8 .5H9.2L5 4.8Z" fill="#fff" stroke="#000" stroke-width=".9"/><path d="M.8 26.5H9.2L5 22.2Z" fill="#fff" stroke="#000" stroke-width=".9"/></svg>
<div class="r" style="left:971px;top:693px;width:13.5px;height:1.6px;background:#111;"></div>
<div class="r" style="left:977px;top:687px;width:1.6px;height:13.5px;background:#111;"></div>
<div class="r" style="left:1001px;top:693px;width:14px;height:1.6px;background:#111;"></div>
<svg class="r" style="left:1027px;top:685px;" width="16" height="16" viewBox="0 0 16 16"><g opacity=".45"><circle cx="8" cy="5" r="3.6" fill="#fff" stroke="#555" stroke-width="1.1"/><circle cx="4.8" cy="10.6" r="3.6" fill="#7fd39a" stroke="#555" stroke-width="1.1"/><circle cx="11.2" cy="10.6" r="3.6" fill="#f08abb" stroke="#555" stroke-width="1.1"/></g></svg>
<svg class="r" style="left:1047px;top:684px;" width="17" height="17" viewBox="0 0 17 17"><circle cx="8.5" cy="8.5" r="7.3" fill="none" stroke="#d0d0d0" stroke-width="1.1"/><circle cx="8.5" cy="8.5" r="2.4" fill="none" stroke="#d0d0d0" stroke-width="1.1"/></svg>
<svg class="r" style="left:1072px;top:684px;" width="17" height="17" viewBox="0 0 17 17"><path d="M11 4L13 2Q14.6 .5 15.7 1.6Q16.8 2.8 15.3 4.4L13.3 6.4Z" fill="#000"/><path d="M9.4 4.2L13.1 7.9" stroke="#000" stroke-width="2.3"/><path d="M10.6 6.2L3.5 13.3Q2.2 14.8 2.9 15.4Q3.6 16 5 14.8L12.1 7.7" stroke="#000" stroke-width="1.3" fill="#fff"/><path d="M2.6 .8C4.2 3 5 4.4 5 5.4A2.4 2.4 0 0 1 .2 5.4C.2 4.4 1 3 2.6 .8Z" fill="#0a96e8"/></svg>
<div class="t" style="left:1436.3px;top:686px;font-size:12.1px;">RVBA :</div>
<div class="box" style="left:1478px;top:679.5px;width:73px;height:25.5px"></div>
<div class="t" style="left:1483px;top:686px;font-size:12.1px;">ffff11ff</div>
<div class="t" style="left:1293.3px;top:720px;font-size:12.1px;">Mode de fondu :</div>
<div class="btn" style="left:1391.5px;top:714.5px;width:165px;height:24px"></div>
<div class="t" style="left:1396px;top:720px;font-size:12.1px;">Normal</div>
<svg class="r" style="left:1538px;top:723px;" width="12" height="7" viewBox="0 0 12 7"><path d="M0 0H12L6 6.5Z" fill="#2e3436"/></svg>
<div class="r" style="left:959px;top:743px;width:515px;height:30px;background:#deddda;border-radius:3px 0 0 3px;border:1px solid #cdc7c2;border-right:none"></div>
<div class="r" style="left:959px;top:743px;width:2px;height:30px;background:#3584e4;border-radius:3px 0 0 3px"></div>
<div class="t" style="left:963.4px;top:752px;font-size:12.1px;">Flou (%)</div>
<div class="box" style="left:1473px;top:743px;width:82px;height:30px"></div>
<div class="r" style="left:1516px;top:744px;width:1px;height:28px;background:#e6e3e0;"></div>
<div class="r" style="left:1535px;top:744px;width:1px;height:28px;background:#e6e3e0;"></div>
<div class="t" style="left:1480px;top:752px;font-size:12.1px;">0,0</div>
<div class="r" style="left:1519.0px;top:757.0px;width:14px;height:2px;background:#c0bfbc;"></div>
<div class="r" style="left:1538.0px;top:757.0px;width:14px;height:2px;background:#2e3436;"></div>
<div class="r" style="left:1544.0px;top:751.0px;width:2px;height:14px;background:#2e3436;"></div>
<div class="r" style="left:959px;top:779.5px;width:515px;height:29px;background:#4a90d9;border-radius:3px 0 0 3px"></div>
<div class="t" style="left:963.4px;top:788px;font-size:12.1px;color:#fff;">Opacité (%)</div>
<div class="box" style="left:1473px;top:779.5px;width:82px;height:29px"></div>
<div class="r" style="left:1516px;top:780.5px;width:1px;height:27px;background:#e6e3e0;"></div>
<div class="r" style="left:1535px;top:780.5px;width:1px;height:27px;background:#e6e3e0;"></div>
<div class="t" style="left:1480px;top:788px;font-size:12.1px;">100,0</div>
<div class="r" style="left:1519.0px;top:793.0px;width:14px;height:2px;background:#2e3436;"></div>
<div class="r" style="left:1538.0px;top:793.0px;width:14px;height:2px;background:#c0bfbc;"></div>
<div class="r" style="left:1544.0px;top:787.0px;width:2px;height:14px;background:#c0bfbc;"></div>
<svg class="r" style="left:1574px;top:88px;" width="16" height="16" viewBox="0 0 16 16"><path d="M1.2 4H7.5L11 7.5V15H1.2Z" stroke="#000" stroke-width="2" fill="none"/><path d="M12.5 0l.9 2.3 2.4.1-1.9 1.5.7 2.4-2.1-1.4-2.1 1.4.7-2.4-1.9-1.5 2.4-.1z" fill="#0a8a0a"/></svg>
<svg class="r" style="left:1574px;top:113px;" width="16" height="15" viewBox="0 0 16 15"><path d="M0 14V1.5H6L7.5 3.2H13V5.5H3.2Z" fill="#000"/><path d="M.5 14.5L3.6 6.8H16L13 14.5Z" fill="#000"/></svg>
<svg class="r" style="left:1574px;top:137px;" width="16" height="17" viewBox="0 0 16 17"><path d="M6.6 0H9.4V5H12L8 9.2L4 5H6.6Z" fill="#0a8a0a"/><path d="M2.8 8.3L.9 12.3V15.6H15.1V12.3L13.2 8.3H11.6L13 11.6H3L4.4 8.3Z" fill="#000"/><rect x="3.3" y="12.6" width="9.4" height="1.3" fill="#fff"/></svg>
<svg class="r" style="left:1574px;top:162px;" width="16" height="14" viewBox="0 0 16 14"><rect x="3" y="0" width="10" height="3" fill="#000"/><rect x="0" y="4" width="16" height="6.2" rx="1" fill="#000"/><rect x="3.4" y="8.3" width="9.2" height="5.7" fill="#000" stroke="#f6f5f4" stroke-width="1"/></svg>
<div class="r" style="left:1568.5px;top:189.5px;width:27.5px;height:1px;background:#dcd9d6;"></div>
<svg class="r" style="left:1574px;top:200.5px;" width="16" height="16" viewBox="0 0 16 16"><path d="M5.5 4.5V1.2H11L14.5 4.5V15H5.5V12" stroke="#000" stroke-width="2" fill="none"/><path d="M0 8.3H7" stroke="#0a8a0a" stroke-width="2"/><path d="M6.2 5L10.2 8.3L6.2 11.6Z" fill="#0a8a0a"/></svg>
<svg class="r" style="left:1574px;top:225.5px;" width="17" height="16" viewBox="0 0 17 16"><path d="M10.8 6.5V4.5L7.5 1.2H1.2V15H10.8V12.5" stroke="#000" stroke-width="2" fill="none"/><path d="M6 9.3H13" stroke="#0a8a0a" stroke-width="2"/><path d="M12 6L16 9.3L12 12.6Z" fill="#0a8a0a"/></svg>
<div class="r" style="left:1568.5px;top:253.5px;width:27.5px;height:1px;background:#dcd9d6;"></div>
<svg class="r" style="left:1574px;top:265.5px;" width="16" height="14" viewBox="0 0 16 14"><path d="M3 4.8H10Q13.8 4.8 13.8 8.4Q13.8 12 10 12H7.5" stroke="#000" stroke-width="2" fill="none"/><path d="M5.4 .8V8.8L.6 4.8Z" fill="#000"/></svg>
<svg class="r" style="left:1574px;top:291.5px;" width="16" height="14" viewBox="0 0 16 14"><path d="M13 4.8H6Q2.2 4.8 2.2 8.4Q2.2 12 6 12H8.5" stroke="#aaa" stroke-width="2" fill="none"/><path d="M10.6 .8V8.8L15.4 4.8Z" fill="#aaa"/></svg>
<div class="r" style="left:1568.5px;top:317.5px;width:27.5px;height:1px;background:#dcd9d6;"></div>
<svg class="r" style="left:1574px;top:329.5px;" width="16" height="16" viewBox="0 0 16 16"><rect x="0" y="0" width="10" height="10" fill="#000"/><rect x="5.2" y="5.2" width="10.8" height="10.8" fill="#000" stroke="#f6f5f4" stroke-width="1.2"/></svg>
<svg class="r" style="left:1574px;top:354.5px;" width="16" height="16" viewBox="0 0 16 16"><path d="M3.2 .5L11 10.8M12.8 .5L5 10.8" stroke="#000" stroke-width="1.9" fill="none"/><circle cx="3.6" cy="12.6" r="2.5" fill="none" stroke="#000" stroke-width="1.8"/><circle cx="12.4" cy="12.6" r="2.5" fill="none" stroke="#000" stroke-width="1.8"/></svg>
<svg class="r" style="left:1574px;top:379.5px;" width="16" height="16" viewBox="0 0 16 16"><rect x="1.6" y="2.4" width="12.8" height="12.8" rx="1" fill="none" stroke="#000" stroke-width="1.8"/><rect x="5" y="0" width="6" height="3.6" fill="#000"/><path d="M4.2 5.2H11.8V10.4L9.6 12.6H4.2Z" fill="#000"/></svg>
<div class="r" style="left:1568.5px;top:406.5px;width:27.5px;height:1px;background:#dcd9d6;"></div>
<svg class="r" style="left:1574px;top:418.5px;" width="16" height="16" viewBox="0 0 16 16"><circle cx="7.3" cy="7.3" r="7" fill="#000"/><path d="M12 12L15.2 15.2" stroke="#000" stroke-width="2.8" stroke-linecap="round"/><rect x="3.3" y="3.3" width="8" height="8" fill="none" stroke="#fff" stroke-width="1.1" stroke-dasharray="1 1"/></svg>
<svg class="r" style="left:1574px;top:443.5px;" width="16" height="16" viewBox="0 0 16 16"><circle cx="7.3" cy="7.3" r="7" fill="#000"/><path d="M12 12L15.2 15.2" stroke="#000" stroke-width="2.8" stroke-linecap="round"/><circle cx="6" cy="6" r="3" fill="#fff"/><rect x="6.4" y="6.4" width="4.8" height="4.8" fill="#fff" stroke="#000" stroke-width=".9"/></svg>
<svg class="r" style="left:1574px;top:468.5px;" width="16" height="16" viewBox="0 0 16 16"><circle cx="7.3" cy="7.3" r="7" fill="#000"/><path d="M12 12L15.2 15.2" stroke="#000" stroke-width="2.8" stroke-linecap="round"/><rect x="3.8" y="2.4" width="7" height="9.8" rx=".8" fill="#fff"/><rect x="4.9" y="3.6" width="4.8" height="7.4" fill="#000"/></svg>
<svg class="r" style="left:1574px;top:492.5px;" width="17" height="17" viewBox="0 0 17 17"><rect x="3.6" y="3.6" width="9.8" height="9.8" fill="none" stroke="#000" stroke-width="1.3"/><path d="M8.5 6V11M6 8.5H11" stroke="#000" stroke-width="1.3"/><path d="M.5 3V.5H3M14 .5H16.5V3M16.5 14V16.5H14M3 16.5H.5V14" stroke="#888" stroke-width="1" fill="none"/></svg>
<div class="r" style="left:1568.5px;top:520px;width:27.5px;height:1px;background:#dcd9d6;"></div>
<svg class="r" style="left:1574px;top:532.5px;" width="16" height="16" viewBox="0 0 16 16"><rect x="0" y="0" width="9.6" height="9.6" fill="#000"/><rect x="5.2" y="5.2" width="10.8" height="10.8" fill="#0a8a0a" stroke="#f6f5f4" stroke-width="1.2"/></svg>
<svg class="r" style="left:1574px;top:557.5px;" width="16" height="16" viewBox="0 0 16 16"><rect x="0" y="0" width="9.6" height="9.6" fill="#000"/><rect x="5.2" y="5.2" width="10.8" height="10.8" fill="#000" stroke="#f6f5f4" stroke-width="1.2"/><rect x="8.2" y="10.4" width="5.4" height="4" fill="#fff"/><path d="M9.5 10.4V9.2a1.4 1.4 0 0 1 2.8 0V10.4" stroke="#fff" stroke-width="1.1" fill="none"/></svg>
<svg class="r" style="left:1574px;top:582px;" width="16" height="16" viewBox="0 0 16 16"><rect x="0" y="0" width="9.6" height="9.6" fill="#000"/><rect x="5.2" y="5.2" width="10.8" height="10.8" fill="#000" stroke="#f6f5f4" stroke-width="1.2"/><rect x="8.2" y="10.4" width="5.4" height="4" fill="#fff"/><path d="M11 10.4V8.8a1.4 1.4 0 0 1 2.8 0V9.4" stroke="#fff" stroke-width="1.1" fill="none"/></svg>
<div class="r" style="left:1568.5px;top:609.5px;width:27.5px;height:1px;background:#dcd9d6;"></div>
<svg class="r" style="left:1574px;top:620px;" width="16" height="16" viewBox="0 0 16 16"><circle cx="6.6" cy="7" r="3.9" fill="#000"/><rect x="5.4" y="7.6" width="7" height="5.4" fill="#000"/><path d="M5.4 13L12.4 7.6V13Z" fill="#000"/><g fill="#0a8a0a"><rect x="0" y="0" width="3" height="3"/><rect x="13" y="0" width="3" height="3"/><rect x="0" y="13" width="3" height="3"/><rect x="13" y="13" width="3" height="3"/></g></svg>
<svg class="r" style="left:1574px;top:646.5px;" width="16" height="16" viewBox="0 0 16 16"><circle cx="6.6" cy="6.6" r="3.9" fill="#000"/><path d="M6 12.6L12.4 7V12.6Z" fill="#777"/><g fill="#000"><rect x="0" y="0" width="2.6" height="2.6"/><rect x="6.7" y="0" width="2.6" height="2.6"/><rect x="13.4" y="0" width="2.6" height="2.6"/><rect x="0" y="6.7" width="2.6" height="2.6"/><rect x="13.4" y="6.7" width="2.6" height="2.6"/><rect x="0" y="13.4" width="2.6" height="2.6"/><rect x="6.7" y="13.4" width="2.6" height="2.6"/><rect x="13.4" y="13.4" width="2.6" height="2.6"/></g></svg>
<div class="r" style="left:1568.5px;top:673.5px;width:27.5px;height:1px;background:#dcd9d6;"></div>
<svg class="r" style="left:1574px;top:684.5px;" width="17" height="17" viewBox="0 0 17 17"><path d="M1.5 12.8V1.5H12.8" stroke="#000" stroke-width="1.3" fill="none"/><path d="M16.6 2.2L10.9 11L8.1 8.6Z" fill="#000"/><path d="M7.8 9.4L9.8 11.2L7.6 12.8L6.4 11.6Z" fill="#000"/><path d="M6 12L7.2 13.2Q5.5 16 1.8 16.2Q4.6 14.6 6 12Z" fill="#1c96e8"/></svg>
<svg class="r" style="left:1574px;top:711.5px;" width="16" height="14" viewBox="0 0 16 14"><path d="M.8 0H15.2V4H14Q13.6 2 11.6 2H9.6V11.6Q9.6 12.6 11.4 12.6V13.6H4.6V12.6Q6.4 12.6 6.4 11.6V2H4.4Q2.4 2 2 4H.8Z" fill="#000"/></svg>
<svg class="r" style="left:1574px;top:737px;" width="16" height="14" viewBox="0 0 16 14"><path d="M4 0H15L12 3.5H1Z" fill="#1c7fd6"/><path d="M6 4.9H16L13 8.4H3Z" fill="#111"/><path d="M4 9.8H15L12 13.3H1Z" fill="#111"/></svg>
<svg class="r" style="left:1574px;top:761px;" width="16" height="16" viewBox="0 0 16 16"><rect x=".8" y="2.6" width="14.4" height="12" fill="none" stroke="#000" stroke-width="1.4"/><rect x="1.6" y="0" width="12.8" height="1.5" fill="#0a8a0a"/><path d="M6.3 5.8L3.6 8.6L6.3 11.4M9.7 5.8L12.4 8.6L9.7 11.4" stroke="#000" stroke-width="1.3" fill="none"/></svg>
<svg class="r" style="left:1578.5px;top:790px;" width="8" height="19" viewBox="0 0 8 19"><path d="M.3 .5V18.5L7.6 9.5Z" fill="#111"/></svg>
<div class="btn on" style="left:1px;top:80px;width:25px;height:25px;background:linear-gradient(#e4e4e2,#eeeeec);border-color:#cbc9c3;border-radius:4px"></div>
<svg class="r" style="left:5px;top:84.5px;" width="16" height="17" viewBox="0 0 16 17"><path d="M2.4 1.6L14.4 8.2L9.2 9.4L12 14.6L9.4 15.8L6.8 10.6L3 13.8Z" fill="#fff" stroke="#000" stroke-width="1.9" stroke-linejoin="round"/></svg>
<svg class="r" style="left:5px;top:111.5px;" width="16" height="15" viewBox="0 0 16 15"><path d="M1.6 13.4Q2.4 8 5 4.6Q8 1.8 13.6 1.2" stroke="#444" stroke-width="1" fill="none"/><rect x="2.6" y="2.8" width="5" height="5" fill="#fff" stroke="#000" stroke-width="1.6"/><path d="M10.2 8.6L14.6 11L10.2 13.4Z" fill="#000"/></svg>
<div class="r" style="left:0px;top:132px;width:28px;height:1px;background:#dcd9d6;"></div>
<svg class="r" style="left:5.5px;top:139px;" width="15" height="15" viewBox="0 0 15 15"><rect x="1.2" y="1.4" width="12.6" height="11.8" fill="#ff1493" stroke="#000" stroke-width="1.5"/></svg>
<svg class="r" style="left:5.5px;top:164px;" width="15" height="15" viewBox="0 0 15 15"><circle cx="7.5" cy="7.5" r="6.4" fill="#ff55a8" stroke="#000" stroke-width="1.5"/></svg>
<svg class="r" style="left:5px;top:189.5px;" width="16" height="16" viewBox="0 0 16 16"><path d="M1 6L6.6 1L12.2 4L11.5 6.5L9 6.2L6.4 8.6L7.4 11.6L3 11.8Z" fill="#ff55a8" stroke="#000" stroke-width="1.3" stroke-linejoin="round"/><path d="M10.6 6.4L11.9 9.2L15 9.6L12.8 11.8L13.3 14.8L10.6 13.4L7.9 14.8L8.4 11.8L6.2 9.6L9.3 9.2Z" fill="#ffb0d8" stroke="#000" stroke-width="1.2" stroke-linejoin="round"/></svg>
<svg class="r" style="left:5px;top:216px;" width="16" height="16" viewBox="0 0 16 16"><path d="M8 1L14.6 4.4V11.6L8 15L1.4 11.6V4.4Z" fill="#ff1493" stroke="#000" stroke-width="1.6" stroke-linejoin="round"/><path d="M8 8L14 4.8V11.2L8 14.4Z" fill="#fff"/><path d="M8 1.6L14 4.6L8 7.8L2 4.6Z" fill="#ff9ad0"/><path d="M1.4 4.4L8 8L14.6 4.4M8 8V15" stroke="#000" stroke-width="1.6" fill="none"/></svg>
<svg class="r" style="left:5px;top:242.5px;" width="16" height="16" viewBox="0 0 16 16"><path d="M8.4 8.6Q7 7.6 6.2 9Q5.8 11.2 8.4 11.4Q11.8 11 11.4 7.4Q10.2 3.6 6.2 4.4Q1.8 5.8 2.6 10.6Q4.2 15 9 14.6Q14.6 13.4 14.4 7" stroke="#000" stroke-width="2.2" fill="none" stroke-linecap="round"/></svg>
<div class="r" style="left:0px;top:263px;width:28px;height:1px;background:#dcd9d6;"></div>
<svg class="r" style="left:5px;top:269.5px;" width="16" height="16" viewBox="0 0 16 16"><path d="M2 10V4Q5 1.2 10 2.6" stroke="#333" stroke-width="1" fill="none"/><circle cx="2" cy="2.6" r="1.8" fill="#0a8a0a"/><rect x=".2" y="9.4" width="3.8" height="3.8" fill="#0a8a0a"/><path d="M12.6 3.4L15.8 6.8L11.4 12.6L5.4 15.8L7.6 9.4Z" fill="#000"/><path d="M6.2 15L10.6 9.6" stroke="#fff" stroke-width="1"/><circle cx="10.8" cy="9.4" r="1" fill="#fff"/></svg>
<svg class="r" style="left:5px;top:294.5px;" width="16" height="17" viewBox="0 0 16 17"><path d="M1 5.4Q.4 2 3 1.4Q6.4 1.4 4.8 4.4Q3.4 7.4 6.6 7.4" stroke="#0a8a0a" stroke-width="1.6" fill="none"/><path d="M12.4 2.4L15.6 5.6L8.2 13L5 9.8Z" fill="#000"/><path d="M4.2 10.8L7.2 13.8L2.4 15.4Z" fill="#0a8a0a"/></svg>
<svg class="r" style="left:5px;top:321px;" width="16" height="16" viewBox="0 0 16 16"><path d="M1.6 4.6Q5.2 2.4 4.4 5.6Q3.4 8.6 6.6 8" stroke="#0a8a0a" stroke-width="1.5" fill="none"/><path d="M15.6 1L8 10.2L6 8.4Z" fill="#000"/><path d="M5.4 9.2L7.2 10.8Q5.6 14.4 1.6 15Q4.4 12.6 5.4 9.2Z" fill="#0a8a0a"/></svg>
<svg class="r" style="left:5px;top:348.5px;" width="16" height="15" viewBox="0 0 16 15"><text x="-.6" y="13" font-family="DejaVu Sans" font-weight="bold" font-size="14.6" fill="#000">A</text><rect x="13" y="-1" width="1.7" height="16" fill="#0a8a0a"/></svg>
<div class="r" style="left:0px;top:368px;width:28px;height:1px;background:#dcd9d6;"></div>
<svg class="r" style="left:5px;top:374.5px;" width="16" height="16" viewBox="0 0 16 16"><rect x=".7" y=".7" width="14.6" height="14.6" fill="#fff" stroke="#000" stroke-width="1.4"/><rect x="2.4" y="2.4" width="11.2" height="11.2" fill="url(#lg1)"/><defs><linearGradient id="lg1" x1="0" y1="0" x2="1" y2="1"><stop offset=".1" stop-color="#1c8fe6"/><stop offset="1" stop-color="#000"/></linearGradient></defs></svg>
<svg class="r" style="left:5px;top:400.5px;" width="16" height="16" viewBox="0 0 16 16"><rect x=".7" y=".7" width="14.6" height="14.6" fill="#bfe0f8" stroke="#000" stroke-width="1.4"/><path d="M8 8Q3.6 6.4 4.4 1.4Q9.4 2.6 8 8Q9.6 3.6 14.6 4.4Q13.4 9.4 8 8Q12.4 9.6 11.6 14.6Q6.6 13.4 8 8Q6.4 12.4 1.4 11.6Q2.6 6.6 8 8Z" fill="#1c8fe6" stroke="#03243c" stroke-width="1"/></svg>
<svg class="r" style="left:5px;top:426px;" width="17" height="17" viewBox="0 0 17 17"><path d="M11 4L13 2Q14.6 .5 15.7 1.6Q16.8 2.8 15.3 4.4L13.3 6.4Z" fill="#000"/><path d="M9.4 4.2L13.1 7.9" stroke="#000" stroke-width="2.3"/><path d="M10.6 6.2L3.5 13.3Q2.2 14.8 2.9 15.4Q3.6 16 5 14.8L12.1 7.7" stroke="#000" stroke-width="1.3" fill="#fff"/><path d="M2.6 .8C4.2 3 5 4.4 5 5.4A2.4 2.4 0 0 1 .2 5.4C.2 4.4 1 3 2.6 .8Z" fill="#0a96e8"/></svg>
<svg class="r" style="left:5px;top:452.5px;" width="16" height="16" viewBox="0 0 16 16"><path d="M8.6 .8L15.4 7.6L8.4 14.2L1.8 7.6Z" fill="#111"/><path d="M5.2 8L8.6 4.6L12 8Z" fill="#fff"/><path d="M2.6 9.4Q5.4 13.4 2.6 14.6Q-.2 13.4 2.6 9.4Z" fill="#1c7fd6"/></svg>
<div class="r" style="left:0px;top:473px;width:28px;height:1px;background:#dcd9d6;"></div>
<svg class="r" style="left:5px;top:480px;" width="16" height="15" viewBox="0 0 16 15"><path d="M.6 14V7.4Q2.4 6.2 3.6 7.4Q4.4 2.4 9.4 1Q14 .6 13.6 5.2Q12.6 2.8 10.2 4.2Q8.6 6 10.6 7.2Q13.4 6.4 15.4 8.6V14Z" fill="#000"/></svg>
<svg class="r" style="left:5px;top:506px;" width="16" height="16" viewBox="0 0 16 16"><rect x="6.2" y="8" width="8.6" height="7.4" rx=".8" fill="#000"/><rect x="8" y="4.6" width="5" height="3" fill="#000"/><g fill="#555"><circle cx="1.4" cy="1.4" r=".9"/><circle cx="4.4" cy="1" r=".9"/><circle cx="2.6" cy="4" r=".9"/><circle cx="5.6" cy="3.6" r=".9"/><circle cx="1.2" cy="6.6" r=".9"/><circle cx="4.4" cy="6.6" r=".9"/><circle cx="7" cy="1.6" r=".9"/></g></svg>
<svg class="r" style="left:5px;top:532px;" width="16" height="16" viewBox="0 0 16 16"><path d="M9.6 1L15 6.4L9.6 11.8L4.2 6.4Z" fill="#000"/><path d="M3.4 7.2L8.8 12.6L7.4 14H4L1.6 11.6V9Z" fill="#999"/><path d="M0 15.2H13" stroke="#000" stroke-width="1.2" stroke-dasharray="2 1.4"/></svg>
<svg class="r" style="left:5px;top:558px;" width="16" height="16" viewBox="0 0 16 16"><path d="M1.4 3.2Q6 2.4 6.6 7Q7.2 11.6 11.6 11.2" stroke="#000" stroke-width="2.2" fill="none"/><path d="M9.4 6.6L15.4 11.8L8.6 14.6Z" fill="#000"/></svg>
<div class="r" style="left:0px;top:578px;width:28px;height:1px;background:#dcd9d6;"></div>
<svg class="r" style="left:6px;top:584px;" width="15" height="16" viewBox="0 0 15 16"><path d="M1.8 2.2L12.6 .8V15.2H1.8Z" fill="#fff" stroke="#000" stroke-width="1.6" stroke-linejoin="round"/><path d="M8.6 4H12M9.8 6.6H12M8.6 9.2H12M9.8 11.8H12" stroke="#000" stroke-width="1.1"/></svg>
<svg class="r" style="left:5px;top:610.5px;" width="16" height="16" viewBox="0 0 16 16"><circle cx="6.6" cy="6.6" r="5.2" fill="none" stroke="#000" stroke-width="1.9"/><path d="M10.6 10.6L14.6 14.6" stroke="#000" stroke-width="2.6" stroke-linecap="round"/></svg>
<svg class="r" style="left:5px;top:636px;" width="16" height="16" viewBox="0 0 16 16"><path d="M5.4 4.4V1.8Q5.4 .8 6.4 .8H12L14.8 3.6V11.2Q14.8 12.2 13.8 12.2H11.4" stroke="#000" stroke-width="1.6" fill="none"/><rect x="1" y="4.6" width="9.6" height="10.6" rx="1" fill="#fff" stroke="#000" stroke-width="1.6"/></svg>
<svg class="r" style="left:0px;top:826px;" width="1516" height="16" viewBox="0 0 1516 16"><rect x="0" y="0" width="17" height="16" fill="#fff"/><path d="M1.5 1L15.5 15M15.5 1L1.5 15" stroke="#8b1a1a" stroke-width="1.8"/><rect x="18" y="0" width="16" height="16" fill="#000000"/><rect x="35" y="0" width="16" height="16" fill="#1a1a1a"/><rect x="52" y="0" width="16" height="16" fill="#333333"/><rect x="69" y="0" width="16" height="16" fill="#4d4d4d"/><rect x="86" y="0" width="16" height="16" fill="#666666"/><rect x="103" y="0" width="16" height="16" fill="#808080"/><rect x="120" y="0" width="16" height="16" fill="#999999"/><rect x="137" y="0" width="16" height="16" fill="#b3b3b3"/><rect x="154" y="0" width="16" height="16" fill="#cccccc"/><rect x="171" y="0" width="16" height="16" fill="#e6e6e6"/><rect x="188" y="0" width="16" height="16" fill="#ececec"/><rect x="205" y="0" width="16" height="16" fill="#f2f2f2"/><rect x="222" y="0" width="16" height="16" fill="#f9f9f9"/><rect x="239" y="0" width="16" height="16" fill="#ffffff"/><rect x="256" y="0" width="16" height="16" fill="#800000"/><rect x="273" y="0" width="16" height="16" fill="#ff0000"/><rect x="290" y="0" width="16" height="16" fill="#808000"/><rect x="307" y="0" width="16" height="16" fill="#ffff00"/><rect x="324" y="0" width="16" height="16" fill="#008000"/><rect x="341" y="0" width="16" height="16" fill="#00ff00"/><rect x="358" y="0" width="16" height="16" fill="#008080"/><rect x="375" y="0" width="16" height="16" fill="#00ffff"/><rect x="392" y="0" width="16" height="16" fill="#000080"/><rect x="409" y="0" width="16" height="16" fill="#0000ff"/><rect x="426" y="0" width="16" height="16" fill="#800080"/><rect x="443" y="0" width="16" height="16" fill="#ff00ff"/><rect x="460" y="0" width="16" height="16" fill="#2b0000"/><rect x="477" y="0" width="16" height="16" fill="#550000"/><rect x="494" y="0" width="16" height="16" fill="#800000"/><rect x="511" y="0" width="16" height="16" fill="#aa0000"/><rect x="528" y="0" width="16" height="16" fill="#d40000"/><rect x="545" y="0" width="16" height="16" fill="#ff0000"/><rect x="562" y="0" width="16" height="16" fill="#ff2a2a"/><rect x="579" y="0" width="16" height="16" fill="#ff5555"/><rect x="596" y="0" width="16" height="16" fill="#ff8080"/><rect x="613" y="0" width="16" height="16" fill="#ffaaaa"/><rect x="630" y="0" width="16" height="16" fill="#ffd5d5"/><rect x="647" y="0" width="16" height="16" fill="#280b0b"/><rect x="664" y="0" width="16" height="16" fill="#501616"/><rect x="681" y="0" width="16" height="16" fill="#782121"/><rect x="698" y="0" width="16" height="16" fill="#a02c2c"/><rect x="715" y="0" width="16" height="16" fill="#c83737"/><rect x="732" y="0" width="16" height="16" fill="#d35f5f"/><rect x="749" y="0" width="16" height="16" fill="#de8787"/><rect x="766" y="0" width="16" height="16" fill="#e9afaf"/><rect x="783" y="0" width="16" height="16" fill="#f4d7d7"/><rect x="800" y="0" width="16" height="16" fill="#241c1c"/><rect x="817" y="0" width="16" height="16" fill="#483737"/><rect x="834" y="0" width="16" height="16" fill="#6c5353"/><rect x="851" y="0" width="16" height="16" fill="#916f6f"/><rect x="868" y="0" width="16" height="16" fill="#ac9393"/><rect x="885" y="0" width="16" height="16" fill="#c8b7b7"/><rect x="902" y="0" width="16" height="16" fill="#e3dbdb"/><rect x="919" y="0" width="16" height="16" fill="#2b1100"/><rect x="936" y="0" width="16" height="16" fill="#552200"/><rect x="953" y="0" width="16" height="16" fill="#803300"/><rect x="970" y="0" width="16" height="16" fill="#aa4400"/><rect x="987" y="0" width="16" height="16" fill="#d45500"/><rect x="1004" y="0" width="16" height="16" fill="#ff6600"/><rect x="1021" y="0" width="16" height="16" fill="#ff7f2a"/><rect x="1038" y="0" width="16" height="16" fill="#ff9955"/><rect x="1055" y="0" width="16" height="16" fill="#ffb380"/><rect x="1072" y="0" width="16" height="16" fill="#ffccaa"/><rect x="1089" y="0" width="16" height="16" fill="#ffe6d5"/><rect x="1106" y="0" width="16" height="16" fill="#28170b"/><rect x="1123" y="0" width="16" height="16" fill="#502d16"/><rect x="1140" y="0" width="16" height="16" fill="#784421"/><rect x="1157" y="0" width="16" height="16" fill="#a05a2c"/><rect x="1174" y="0" width="16" height="16" fill="#c87137"/><rect x="1191" y="0" width="16" height="16" fill="#d38d5f"/><rect x="1208" y="0" width="16" height="16" fill="#deaa87"/><rect x="1225" y="0" width="16" height="16" fill="#e9c6af"/><rect x="1242" y="0" width="16" height="16" fill="#f4e3d7"/><rect x="1259" y="0" width="16" height="16" fill="#241f1c"/><rect x="1276" y="0" width="16" height="16" fill="#483e37"/><rect x="1293" y="0" width="16" height="16" fill="#6c5d53"/><rect x="1310" y="0" width="16" height="16" fill="#917c6f"/><rect x="1327" y="0" width="16" height="16" fill="#ac9d93"/><rect x="1344" y="0" width="16" height="16" fill="#c8beb7"/><rect x="1361" y="0" width="16" height="16" fill="#e3dedb"/><rect x="1378" y="0" width="16" height="16" fill="#2b2200"/><rect x="1395" y="0" width="16" height="16" fill="#554400"/><rect x="1412" y="0" width="16" height="16" fill="#806600"/><rect x="1429" y="0" width="16" height="16" fill="#aa8800"/><rect x="1446" y="0" width="16" height="16" fill="#d4aa00"/><rect x="1463" y="0" width="16" height="16" fill="#ffcc00"/><rect x="1480" y="0" width="16" height="16" fill="#ffd42a"/><rect x="1497" y="0" width="16" height="16" fill="#ffdd55"/></svg>
<svg class="r" style="left:1529px;top:829px;" width="14" height="9" viewBox="0 0 14 9"><path d="M1.5 7.5L7 2L12.5 7.5" stroke="#111" stroke-width="1.8" fill="none"/></svg>
<svg class="r" style="left:1555px;top:829px;" width="14" height="9" viewBox="0 0 14 9"><path d="M1.5 1.5L7 7L12.5 1.5" stroke="#111" stroke-width="1.8" fill="none"/></svg>
<div class="btn" style="left:1577.5px;top:821.5px;width:21px;height:21px"></div>
<svg class="r" style="left:1581px;top:826px;" width="14" height="12" viewBox="0 0 14 12"><path d="M0 1.5H14M0 6H14M0 10.5H14" stroke="#111" stroke-width="1.7"/></svg>
<div class="t" style="left:21.3px;top:846px;font-size:12.1px;">Fond :</div>
<div class="t" style="left:2px;top:861px;font-size:12.1px;">Contour :</div>
<div class="t" style="left:74.5px;top:846px;font-size:12.1px;font-weight:bold;">L</div>
<div class="r" style="left:82px;top:843.7px;width:54.2px;height:15px;background:linear-gradient(90deg,#ffff11,#00ff11);"></div>
<div class="t" style="left:85px;top:861px;font-size:12.1px;font-style:italic">Aucun</div>
<div class="t" style="left:142.5px;top:861px;font-size:12.1px;">0,0757</div>
<div class="t" style="left:188.7px;top:853px;font-size:12.1px;">O :</div>
<div class="box" style="left:207.5px;top:844.5px;width:75px;height:28.5px"></div>
<div class="r" style="left:243.5px;top:845.5px;width:1px;height:26.5px;background:#e6e3e0;"></div>
<div class="r" style="left:262.5px;top:845.5px;width:1px;height:26.5px;background:#e6e3e0;"></div>
<div class="t" style="left:214.5px;top:853px;font-size:12.1px;">100</div>
<div class="r" style="left:246.5px;top:857.75px;width:14px;height:2px;background:#2e3436;"></div>
<div class="r" style="left:265.5px;top:857.75px;width:14px;height:2px;background:#c0bfbc;"></div>
<div class="r" style="left:271.5px;top:851.75px;width:2px;height:14px;background:#c0bfbc;"></div>
<div class="r" style="left:288.7px;top:851px;width:3.3px;height:14.7px;background:#4fd0b0;"></div>
<div class="t" style="left:298.2px;top:853px;font-size:12.1px;">corps plein</div>
<svg class="r" style="left:372px;top:852px;" width="16" height="14" viewBox="0 0 16 14"><path d="M1 7.4Q8 .6 15 7.4Q8 14.2 1 7.4Z" fill="none" stroke="#000" stroke-width="1.7"/><circle cx="8" cy="7.4" r="2.9" fill="#000"/><path d="M2.6 3.2L1.4 1.4M8 2V0M13.4 3.2L14.6 1.4" stroke="#000" stroke-width="1.4"/></svg>
<svg class="r" style="left:400px;top:851px;" width="15" height="15" viewBox="0 0 15 15"><rect x="1" y="7" width="9.4" height="7" rx=".8" fill="#000"/><path d="M8.4 7.5V4.3a2.6 2.6 0 0 1 5.2 0V6" stroke="#000" stroke-width="1.7" fill="none"/></svg>
<div class="r" style="left:418.5px;top:849px;width:1px;height:20px;background:#dcd9d6;"></div>
<div class="t" style="left:446.6px;top:846px;font-size:12.1px;"><b>Chemin</b> 39 nœuds dans calque <b>corps plein</b>. Cliquer sur la sélection pour alterner entre poignées de redimensionnement et de</div>
<div class="t" style="left:446.6px;top:861px;font-size:12.1px;">rotation.</div>
<div class="r" style="left:1239px;top:847px;width:1px;height:25px;background:#dcd9d6;"></div>
<div class="t" style="left:1250.6px;top:845px;font-size:12.1px;">X :</div>
<div class="t" style="left:1250.6px;top:860px;font-size:12.1px;">Y :</div>
<div class="t" style="left:1270px;width:49px;text-align:right;top:845px;font-size:12.1px">28,79</div>
<div class="t" style="left:1270px;width:49px;text-align:right;top:860px;font-size:12.1px">-7,94</div>
<div class="t" style="left:1330px;top:853px;font-size:12.1px;">Z :</div>
<div class="box" style="left:1347px;top:845px;width:106.5px;height:28px"></div>
<div class="r" style="left:1406.5px;top:846px;width:1px;height:26px;background:#e6e3e0;"></div>
<div class="r" style="left:1429.5px;top:846px;width:1px;height:26px;background:#e6e3e0;"></div>
<div class="t" style="left:1355.5px;top:853px;font-size:12.1px;">185%</div>
<div class="r" style="left:1411.5px;top:858.0px;width:14px;height:2px;background:#2e3436;"></div>
<div class="r" style="left:1434.5px;top:858.0px;width:14px;height:2px;background:#2e3436;"></div>
<div class="r" style="left:1440.5px;top:852.0px;width:2px;height:14px;background:#2e3436;"></div>
<div class="t" style="left:1460.6px;top:853px;font-size:12.1px;">R :</div>
<div class="box" style="left:1476px;top:845px;width:116px;height:28px"></div>
<div class="r" style="left:1545px;top:846px;width:1px;height:26px;background:#e6e3e0;"></div>
<div class="r" style="left:1568px;top:846px;width:1px;height:26px;background:#e6e3e0;"></div>
<div class="t" style="left:1493.4px;top:853px;font-size:12.1px;">0,00°</div>
<div class="r" style="left:1550.0px;top:858.0px;width:14px;height:2px;background:#2e3436;"></div>
<div class="r" style="left:1573.0px;top:858.0px;width:14px;height:2px;background:#2e3436;"></div>
<div class="r" style="left:1579.0px;top:852.0px;width:2px;height:14px;background:#2e3436;"></div>
<div class="r" style="left:0px;top:873.5px;width:1600px;height:26.5px;background:linear-gradient(#000 0,#000 1.8px,#6c6c6c 2px,#3a3a3a 10px,#000 11px,#000 15px,#262626 16px,#454545 25.5px,#8c8c8c 26px);"></div>
<svg class="r" style="left:3px;top:875px;" width="32" height="25" viewBox="0 0 32 25"><defs><linearGradient id="lx" x1="0" y1="0" x2="0" y2="1"><stop offset="0" stop-color="#fff"/><stop offset="1" stop-color="#8a8a8a"/></linearGradient></defs><path d="M1 19Q13 13 22 .5Q21.5 6 19.5 9Q11 16 2.5 20.5Z" fill="url(#lx)"/><path d="M22 .5Q23 12 31 24.5H28Q21 14 20 6Z" fill="url(#lx)"/><path d="M7 22.5Q14 17 19.5 9.5L20 12Q14 19 8.5 23.5Z" fill="#9a9a9a"/></svg>
<svg class="r" style="left:40px;top:878px;" width="19" height="19" viewBox="0 0 19 19"><rect x=".5" y=".5" width="18" height="18" rx="2" fill="#2a2a2a" stroke="#3a3a3a"/><path d="M3 8H12L15.5 11.5V13H3Z" fill="#f4f4f4"/></svg>
<svg class="r" style="left:65px;top:877px;" width="21" height="21" viewBox="0 0 21 21"><defs><radialGradient id="gl" cx=".4" cy=".35" r=".7"><stop offset="0" stop-color="#b8d4f4"/><stop offset=".6" stop-color="#4a7ec8"/><stop offset="1" stop-color="#1c3a78"/></radialGradient></defs><circle cx="10.5" cy="10.5" r="10" fill="url(#gl)"/><path d="M5 5Q9 3 11 6Q9 9 11 12Q8 14 6 11Q3 9 5 5ZM13 4Q17 5 17 9Q14 10 13 7Z" fill="#dfeaf8" opacity=".75"/></svg>
<svg class="r" style="left:92px;top:876px" width="22.0" height="19.8" viewBox="0 0 20 18"><defs><linearGradient id="rw92" x1="0" y1="0" x2="0" y2="1"><stop offset="0" stop-color="#e02a2a"/><stop offset="1" stop-color="#7a0606"/></linearGradient></defs><rect x=".5" y="1.5" width="19" height="16" rx="2" fill="#c4c4c2" stroke="#8a8a88" stroke-width=".6"/><rect x="2.6" y="3.6" width="14.8" height="11" fill="url(#rw92)"/><path d="M10 3.6V14.6M2.6 9.1H17.4" stroke="#5a0404" stroke-width=".9"/><rect x="13" y="15.6" width="2" height="1" fill="#e02020"/></svg>
<svg class="r" style="left:121px;top:877px" width="18" height="20" viewBox="0 0 18 20"><rect x="1" y="1.5" width="14.5" height="17" rx="1.5" fill="#fafafa" stroke="#bbb" stroke-width=".8"/><rect x="1" y="1.5" width="14.5" height="3" fill="#5aa0e0"/><path d="M15.5 4L17.5 6L8 16L5 17L6 14Z" fill="#f2c81e" stroke="#a88410" stroke-width=".7"/><rect x="6" y="2" width="4" height="1.6" fill="#111"/></svg>
<svg class="r" style="left:148px;top:878px;" width="24" height="19" viewBox="0 0 24 19"><rect x=".5" y=".5" width="15" height="12" fill="#dcdcda" stroke="#f4f4f4"/><rect x=".5" y=".5" width="15" height="2.2" fill="#7a98c8"/><rect x="7.5" y="5.5" width="15" height="12" fill="#e8e8e6" stroke="#f4f4f4"/><rect x="7.5" y="5.5" width="15" height="2.2" fill="#7a98c8"/></svg>
<div class="r" style="left:177px;top:876px;width:39.5px;height:21.5px;background:#1a6fe0;border:1px solid #cfe0f8"></div>
<svg class="r" style="left:188px;top:878px" width="18" height="19" viewBox="0 0 18 19"><path d="M9 1L17 9.5Q15 11.5 12 11Q13.5 13.5 11 14Q9 13 7 14Q4.5 13.5 6 11Q3 11.5 1 9.5Z" fill="#0c0c0c" stroke="#444" stroke-width=".7"/><path d="M9 2.4L12.4 6.2L10.6 7.2L9 6L7.4 7.2L5.6 6.2Z" fill="#f0f0f0"/><path d="M4 15.5Q9 13.8 14 15.5Q9 17.6 4 15.5Z" fill="#0c0c0c"/></svg>
<div class="r" style="left:217px;top:876px;width:39px;height:21.5px;background:#23292c;"></div>
<div class="r" style="left:262.7px;top:875px;width:83px;height:23.6px;background:#2c3236;border-radius:4.5px"></div>
<svg class="r" style="left:266px;top:877px" width="20" height="18" viewBox="0 0 20 18"><defs><linearGradient id="rw266" x1="0" y1="0" x2="0" y2="1"><stop offset="0" stop-color="#e02a2a"/><stop offset="1" stop-color="#7a0606"/></linearGradient></defs><rect x=".5" y="1.5" width="19" height="16" rx="2" fill="#c4c4c2" stroke="#8a8a88" stroke-width=".6"/><rect x="2.6" y="3.6" width="14.8" height="11" fill="url(#rw266)"/><path d="M10 3.6V14.6M2.6 9.1H17.4" stroke="#5a0404" stroke-width=".9"/><rect x="13" y="15.6" width="2" height="1" fill="#e02020"/></svg>
<div class="t" style="left:286.0px;top:881px;font-size:12px;color:#e8e8e8;">~~~</div>
<div class="r" style="left:348.4px;top:875px;width:83px;height:23.6px;background:#2c3236;border-radius:4.5px"></div>
<svg class="r" style="left:352px;top:878px" width="17" height="18" viewBox="0 0 17 18"><rect x=".5" y=".5" width="16" height="17" fill="#f4f4f4" stroke="#9ab"/><rect x=".5" y=".5" width="16" height="4" fill="#3a68b8"/></svg>
<div class="t" style="left:371.7px;top:881px;font-size:12px;color:#e8e8e8;">residen...</div>
<div class="r" style="left:434.2px;top:875px;width:83px;height:23.6px;background:#2c3236;border-radius:4.5px"></div>
<svg class="r" style="left:438px;top:878px" width="17" height="18" viewBox="0 0 17 18"><rect x=".5" y=".5" width="16" height="17" fill="#e8eef4" stroke="#fff"/><rect x="2" y="2" width="13" height="14" fill="#4a90d0"/><path d="M2 13L7 8L11 12L13 10L15 12V16H2Z" fill="#3a8a4a"/></svg>
<div class="t" style="left:457.5px;top:881px;font-size:12px;color:#e8e8e8;">Inbox - ...</div>
<div class="r" style="left:520.5px;top:875px;width:83px;height:23.6px;background:#2c3236;border-radius:4.5px"></div>
<svg class="r" style="left:524px;top:877px" width="19" height="19" viewBox="0 0 19 19"><circle cx="9.5" cy="9.5" r="9" fill="#e8761a"/><circle cx="9" cy="8.5" r="5.4" fill="#3a6ad0"/><path d="M1 7Q4 2 10 2Q6 5 7 9Q9 12 13 10Q12 16 6 16Q1 13 1 7Z" fill="#f09a20"/></svg>
<div class="t" style="left:543.8px;top:881px;font-size:12px;color:#e8e8e8;">[Linear ...</div>
<div class="r" style="left:606.6px;top:875px;width:83px;height:23.6px;background:#2c3236;border-radius:4.5px"></div>
<svg class="r" style="left:611px;top:877px" width="16" height="20" viewBox="0 0 16 20"><path d="M1 3L8 1V19L1 17Z" fill="#e6cf9a"/><path d="M8 1L14.5 3V17L8 19Z" fill="#c9a966"/><path d="M6.5 2V18.6" stroke="#a88845" stroke-width="1.2"/></svg>
<div class="t" style="left:629.9px;top:881px;font-size:12px;color:#e8e8e8;">patchs</div>
<div class="r" style="left:692.6px;top:875px;width:83px;height:23.6px;background:#2c3236;border-radius:4.5px"></div>
<svg class="r" style="left:696px;top:877px" width="19" height="19" viewBox="0 0 19 19"><circle cx="9.5" cy="9.5" r="9" fill="#f4f4f4"/><circle cx="9.5" cy="9.5" r="6.6" fill="#111"/><text x="9.5" y="13.4" font-family="DejaVu Sans" font-weight="bold" font-size="11" fill="#f4f4f4" text-anchor="middle">a</text></svg>
<div class="t" style="left:715.9px;top:881px;font-size:12px;color:#e8e8e8;">Audacio...</div>
<div class="r" style="left:778.6px;top:875px;width:83px;height:23.6px;background:#2c3236;border-radius:4.5px"></div>
<svg class="r" style="left:782px;top:877px" width="18" height="19" viewBox="0 0 18 19"><path d="M9 1L17 9.5Q15 11.5 12 11Q13.5 13.5 11 14Q9 13 7 14Q4.5 13.5 6 11Q3 11.5 1 9.5Z" fill="#0c0c0c" stroke="#444" stroke-width=".7"/><path d="M9 2.4L12.4 6.2L10.6 7.2L9 6L7.4 7.2L5.6 6.2Z" fill="#f0f0f0"/><path d="M4 15.5Q9 13.8 14 15.5Q9 17.6 4 15.5Z" fill="#0c0c0c"/></svg>
<div class="t" style="left:801.9px;top:881px;font-size:12px;color:#e8e8e8;">[*Nouv...</div>
<div class="r" style="left:864.6px;top:875px;width:83px;height:23.6px;background:#2c3236;border-radius:4.5px"></div>
<svg class="r" style="left:868px;top:877px" width="19" height="19" viewBox="0 0 19 19"><ellipse cx="9.5" cy="11" rx="7.5" ry="7" fill="#b08868"/><path d="M2 6Q9.5 0 17 6L15 9H4Z" fill="#222"/><ellipse cx="9.5" cy="9" rx="5" ry="2" fill="#4ab8c8"/><ellipse cx="9.5" cy="14" rx="3" ry="2" fill="#e8c8b0"/></svg>
<div class="t" style="left:887.9px;top:881px;font-size:12px;color:#e8e8e8;">Résulta...</div>
<div class="r" style="left:950.6px;top:875px;width:83px;height:23.6px;background:#2c3236;border-radius:4.5px"></div>
<svg class="r" style="left:954px;top:877px" width="18" height="19" viewBox="0 0 18 19"><path d="M9 1L17 9.5Q15 11.5 12 11Q13.5 13.5 11 14Q9 13 7 14Q4.5 13.5 6 11Q3 11.5 1 9.5Z" fill="#0c0c0c" stroke="#444" stroke-width=".7"/><path d="M9 2.4L12.4 6.2L10.6 7.2L9 6L7.4 7.2L5.6 6.2Z" fill="#f0f0f0"/><path d="M4 15.5Q9 13.8 14 15.5Q9 17.6 4 15.5Z" fill="#0c0c0c"/></svg>
<div class="t" style="left:973.9px;top:881px;font-size:12px;color:#e8e8e8;">skin_de...</div>
<div class="r" style="left:1036.6px;top:875px;width:83px;height:23.6px;background:#2c3236;border-radius:4.5px"></div>
<svg class="r" style="left:1040px;top:877px" width="18" height="19" viewBox="0 0 18 19"><path d="M9 1L17 9.5Q15 11.5 12 11Q13.5 13.5 11 14Q9 13 7 14Q4.5 13.5 6 11Q3 11.5 1 9.5Z" fill="#0c0c0c" stroke="#444" stroke-width=".7"/><path d="M9 2.4L12.4 6.2L10.6 7.2L9 6L7.4 7.2L5.6 6.2Z" fill="#f0f0f0"/><path d="M4 15.5Q9 13.8 14 15.5Q9 17.6 4 15.5Z" fill="#0c0c0c"/></svg>
<div class="t" style="left:1059.8999999999999px;top:881px;font-size:12px;color:#e8e8e8;">*petit_f...</div>
<div class="r" style="left:1122.6px;top:875px;width:83px;height:23.6px;background:#2c3236;border-radius:4.5px"></div>
<svg class="r" style="left:1127px;top:877px" width="16" height="20" viewBox="0 0 16 20"><path d="M1 3L8 1V19L1 17Z" fill="#e6cf9a"/><path d="M8 1L14.5 3V17L8 19Z" fill="#c9a966"/><path d="M6.5 2V18.6" stroke="#a88845" stroke-width="1.2"/></svg>
<div class="t" style="left:1145.8999999999999px;top:881px;font-size:12px;color:#e8e8e8;">[emoc]</div>
<div class="r" style="left:1208.6px;top:875px;width:83px;height:23.6px;background:#2c3236;border-radius:4.5px"></div>
<svg class="r" style="left:1211px;top:876.5px" width="20" height="21" viewBox="0 0 20 21"><rect width="20" height="21" fill="#f4f4f4"/><circle cx="9" cy="10" r="8" fill="#2a3a1a"/><path d="M3 10Q9 2 16 8Q12 14 6 15Z" fill="#7ab85a"/><path d="M12 9L19 6V13Z" fill="#111"/><rect x="4" y="18" width="10" height="1.2" fill="#e86ab8"/></svg>
<div class="t" style="left:1231.8999999999999px;top:881px;font-size:12px;color:#e8e8e8;">[*[petit...</div>
<div class="r" style="left:1294.6px;top:875px;width:83px;height:23.6px;background:#2c3236;border-radius:4.5px"></div>
<svg class="r" style="left:1298px;top:877px" width="18" height="20" viewBox="0 0 18 20"><rect x="1" y="1.5" width="14.5" height="17" rx="1.5" fill="#fafafa" stroke="#bbb" stroke-width=".8"/><rect x="1" y="1.5" width="14.5" height="3" fill="#5aa0e0"/><path d="M15.5 4L17.5 6L8 16L5 17L6 14Z" fill="#f2c81e" stroke="#a88410" stroke-width=".7"/><rect x="6" y="2" width="4" height="1.6" fill="#111"/></svg>
<div class="t" style="left:1317.8999999999999px;top:881px;font-size:12px;color:#e8e8e8;">[*Sans ...</div>
<svg class="r" style="left:1381px;top:877px;" width="36" height="21" viewBox="0 0 36 21"><rect width="36" height="21" fill="#000"/><path d="M0 21V18L3 17L5 18L8 15L10 17L13 14L15 17L18 16L21 17L24 13L26 12L27 16L30 17L33 15L36 17V21Z" fill="#0c9a1c"/></svg>
<div class="r" style="left:1420.5px;top:875px;width:7px;height:25px;background:#1ee01e;"></div>
<svg class="r" style="left:1431px;top:876px;" width="22" height="22" viewBox="0 0 22 22"><rect x="7" y="1" width="13" height="10" fill="#9ac8f0" stroke="#3a6a9a"/><rect x="1" y="6" width="14" height="11" fill="#3a9ae8" stroke="#cfe4f8" stroke-width="1.2"/><rect x="5" y="18" width="7" height="2" fill="#bbb"/></svg>
<svg class="r" style="left:1456px;top:876px;" width="24" height="23" viewBox="0 0 24 23"><rect x="8" y="1" width="11" height="8" fill="#666" stroke="#888"/><rect x="1" y="6" width="12" height="9" fill="#555" stroke="#999"/><circle cx="16" cy="15" r="6.4" fill="#e8861a" stroke="#b85a0a"/><rect x="15.1" y="10.6" width="1.9" height="5.4" fill="#111"/><rect x="15.1" y="17" width="1.9" height="1.9" fill="#111"/></svg>
<svg class="r" style="left:1483px;top:879px;" width="20" height="17" viewBox="0 0 20 17"><path d="M1 8.5L9 2V15Z" fill="#0e0e0e"/><path d="M11 5Q13 8.5 11 12M14 3Q17.5 8.5 14 14" stroke="#2a2a2a" stroke-width="1.4" fill="none"/></svg>
<svg class="r" style="left:1506px;top:876px;" width="20" height="23" viewBox="0 0 20 23"><rect x="1" y="3" width="18" height="19" rx="1.5" fill="#e89a3a" stroke="#b86a1a"/><rect x="3" y="5" width="14" height="15.5" fill="#fafafa"/><rect x="6" y="0.5" width="8" height="4" rx="1" fill="#6aba4a"/><text x="10" y="18" font-family="DejaVu Sans" font-size="14" fill="#111" text-anchor="middle">P</text></svg>
<svg class="r" style="left:1532px;top:877px;" width="24" height="21" viewBox="0 0 24 21"><rect x="3" y="0" width="18" height="13" fill="#3a3a3a" stroke="#555"/><circle cx="12" cy="13" r="6.6" fill="#3a78d0" stroke="#1a3a78"/><path d="M8 10Q11 8 13 11Q11 14 13 16Q10 17 9 14Z" fill="#cfe0f8" opacity=".8"/></svg>
<div class="t" style="left:1560.5px;top:881px;font-size:12px;color:#e8e8e8;">16:27</div>
</body></html>
